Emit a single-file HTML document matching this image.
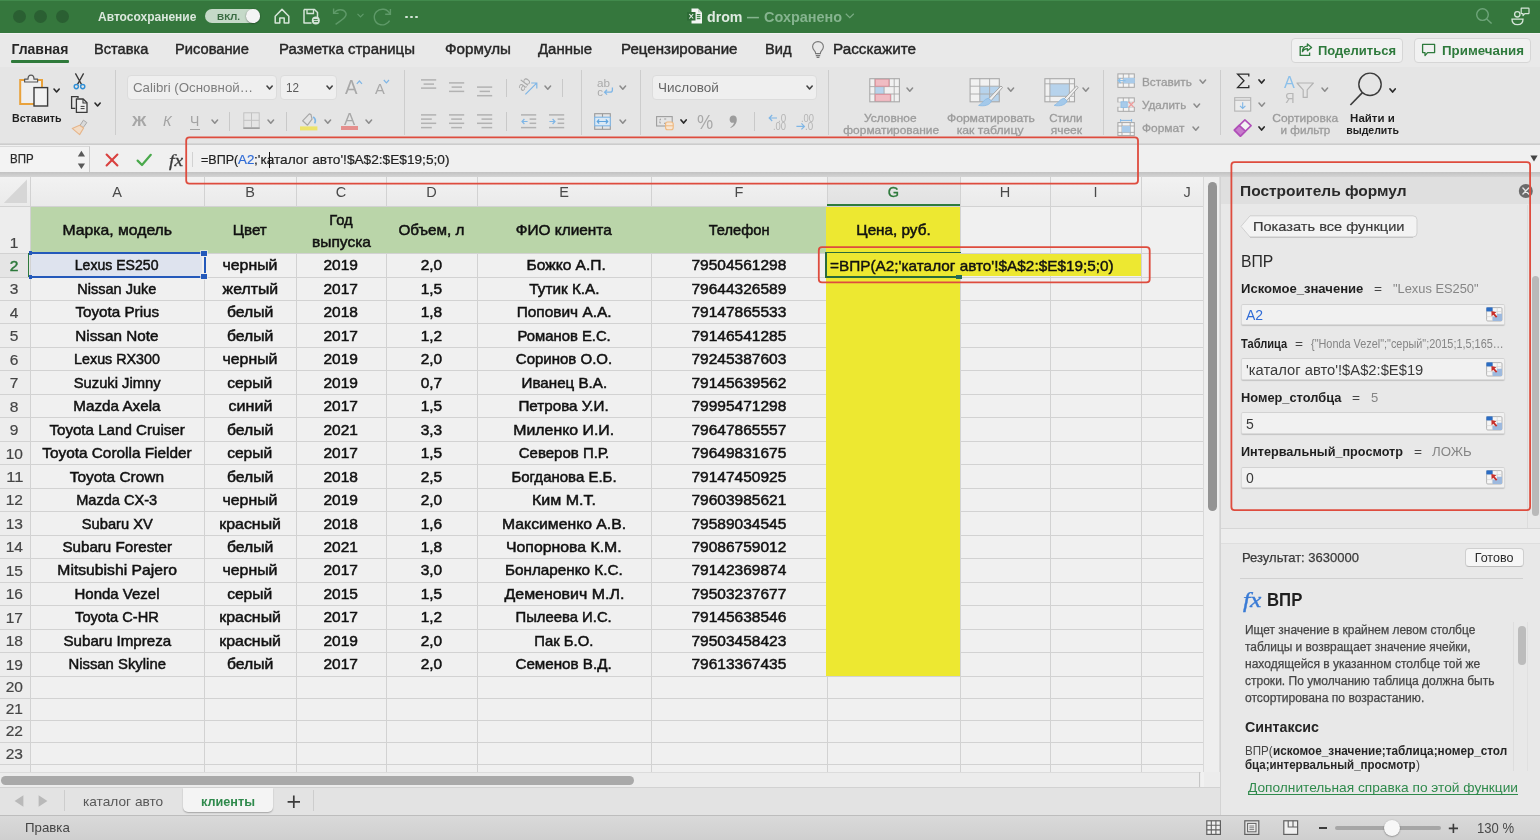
<!DOCTYPE html>
<html><head><meta charset="utf-8"><title>Excel</title>
<style>
html,body{margin:0;padding:0;}
body{font-kerning:none;width:1540px;height:840px;overflow:hidden;position:relative;background:#e6e6e6;font-family:'Liberation Sans', sans-serif;}
svg{overflow:visible}
</style></head><body><div id="root" style="position:absolute;left:0;top:0;width:1540px;height:840px;overflow:hidden;will-change:transform;">
<div style="position:absolute;left:0px;top:0px;width:1540px;height:33px;background:#35773d;"></div>
<div style="position:absolute;left:0px;top:0px;width:1540px;height:1px;background:#418a4c;"></div>
<div style="position:absolute;left:0px;top:33px;width:1540px;height:1px;background:#f2f2f2;"></div>
<div style="position:absolute;left:13.0px;top:10px;width:13px;height:13px;border-radius:50%;background:#2a5f32;"></div>
<div style="position:absolute;left:34.0px;top:10px;width:13px;height:13px;border-radius:50%;background:#2a5f32;"></div>
<div style="position:absolute;left:55.5px;top:10px;width:13px;height:13px;border-radius:50%;background:#2a5f32;"></div>
<div style="position:absolute;left:98.00px;top:8.50px;font:bold 12px 'Liberation Sans', sans-serif;line-height:16px;color:#dbe8dd;white-space:pre;">Автосохранение</div>
<div style="position:absolute;left:204.6px;top:8.8px;width:55px;height:14.6px;border-radius:7.3px;background:#c5d9c8;"></div>
<div style="position:absolute;left:217.00px;top:10.80px;font:bold 9px 'Liberation Sans', sans-serif;line-height:12px;color:#3a6b42;white-space:pre;transform-origin:left center;transform:scaleX(1.1051);">ВКЛ.</div>
<div style="position:absolute;left:246.4px;top:9.4px;width:13.4px;height:13.4px;border-radius:50%;background:#f4f4f4;box-shadow:0 0.5px 1.5px rgba(0,0,0,.55);"></div>
<svg style="position:absolute;left:273px;top:7px;" width="18" height="18" viewBox="0 0 18 18"><path d="M2.2 9.2 L9 2.4 L15.8 9.2 V16 H11.2 V11 H6.8 V16 H2.2 Z" fill="none" stroke="#d5e5d8" stroke-width="1.5" stroke-linejoin="round"/></svg>
<svg style="position:absolute;left:302px;top:7px;" width="20" height="19" viewBox="0 0 20 19"><path d="M2 2.5 H12.5 L15.5 5.5 V11 M9 16 H2 Z M2 16 V2.5" fill="none" stroke="#d5e5d8" stroke-width="1.5" stroke-linejoin="round"/><path d="M5 2.5 V6.5 H11.5 V2.5" fill="none" stroke="#d5e5d8" stroke-width="1.3"/><circle cx="13.8" cy="13.5" r="4" fill="#d5e5d8"/><path d="M11.6 12.6 H15.6 M12 14.6 H16" stroke="#35773d" stroke-width="1"/></svg>
<svg style="position:absolute;left:331px;top:6px;" width="20" height="20" viewBox="0 0 20 20"><path d="M2.6 2.4 V7.4 H7.6" fill="none" stroke="#5f9a69" stroke-width="1.4"/><path d="M2.9 7.2 C6 2.8 12.6 2.6 14.8 6.8 C16.2 10 13.4 12.4 4.6 18.4" fill="none" stroke="#5f9a69" stroke-width="1.4"/></svg>
<svg style="position:absolute;left:357px;top:13px;" width="7" height="5" viewBox="0 0 7 5"><path d="M0.5 0.8 L3.5 3.8 L6.5 0.8" fill="none" stroke="#5f9a69" stroke-width="1.2"/></svg>
<svg style="position:absolute;left:372px;top:6px;" width="22" height="22" viewBox="0 0 22 22"><path d="M18.4 3 V8.2 H13.2" fill="none" stroke="#5f9a69" stroke-width="1.4"/><path d="M18 8 C15.6 2.6 8.4 1.6 4.4 5.8 C0.6 10 2.2 16.6 7.4 18.4 C11.2 19.8 15.6 18.2 17.6 14.6" fill="none" stroke="#5f9a69" stroke-width="1.4"/></svg>
<div style="position:absolute;left:405.3px;top:15.5px;width:2.6px;height:2.6px;border-radius:50%;background:#d5e5d8;"></div>
<div style="position:absolute;left:410.3px;top:15.5px;width:2.6px;height:2.6px;border-radius:50%;background:#d5e5d8;"></div>
<div style="position:absolute;left:415.3px;top:15.5px;width:2.6px;height:2.6px;border-radius:50%;background:#d5e5d8;"></div>
<svg style="position:absolute;left:687px;top:8px;" width="16" height="16" viewBox="0 0 16 16"><path d="M4.5 0.5 H11 L15 4.5 V15.5 H4.5 Z" fill="#f4f6f4"/><path d="M11 0.5 V4.5 H15" fill="#c9d6cb"/><rect x="0" y="4" width="8.5" height="8.5" fill="#2d6b36"/><path d="M2.3 6 L6.2 10.5 M6.2 6 L2.3 10.5" stroke="#e6efe7" stroke-width="1.1"/><path d="M9.8 6.6 H13.4 M9.8 8.6 H13.4 M9.8 10.6 H13.4" stroke="#3d8147" stroke-width="1.1"/></svg>
<div style="position:absolute;left:707.40px;top:7.80px;font:bold 14px 'Liberation Sans', sans-serif;line-height:18px;color:#dfeae1;white-space:pre;transform-origin:left center;transform:scaleX(1.0143);">drom</div>
<div style="position:absolute;left:747.40px;top:7.80px;font:bold 14px 'Liberation Sans', sans-serif;line-height:18px;color:#86b48f;white-space:pre;transform-origin:left center;transform:scaleX(0.8500);">—</div>
<div style="position:absolute;left:763.60px;top:7.80px;font:bold 14px 'Liberation Sans', sans-serif;line-height:18px;color:#86b48f;white-space:pre;transform-origin:left center;transform:scaleX(1.0319);">Сохранено</div>
<svg style="position:absolute;left:844.6px;top:13px;" width="10" height="6" viewBox="0 0 10 6"><path d="M0.8 0.8 L4.8 4.6 L8.8 0.8" fill="none" stroke="#7aab83" stroke-width="1.2"/></svg>
<svg style="position:absolute;left:1474px;top:6px;" width="22" height="22" viewBox="0 0 22 22"><circle cx="8.5" cy="8.6" r="5.8" fill="none" stroke="#6fa57a" stroke-width="1.4"/><path d="M12.7 12.9 L17.6 17.6" stroke="#6fa57a" stroke-width="1.4"/></svg>
<svg style="position:absolute;left:1508px;top:4px;" width="26" height="24" viewBox="0 0 26 24"><circle cx="9.3" cy="10.3" r="2.7" fill="none" stroke="#d5e5d8" stroke-width="1.3"/><path d="M4 15.2 H15 C15 18.8 12.4 20.6 9.5 20.6 C6.6 20.6 4 18.8 4 15.2 Z" fill="none" stroke="#d5e5d8" stroke-width="1.3"/><path d="M13.2 4.2 H20.4 Q21 4.2 21 4.8 V9 Q21 9.6 20.4 9.6 H16.8 L15 11.6 V9.6 H13.8 Q13.2 9.6 13.2 9 Z" fill="#35773d" stroke="#d5e5d8" stroke-width="1.2" stroke-linejoin="round"/></svg>
<div style="position:absolute;left:0px;top:34px;width:1540px;height:33px;background:#e9e9e9;"></div>
<div style="position:absolute;left:0px;top:67px;width:1540px;height:77px;background:#e5e5e5;"></div>
<div style="position:absolute;left:0px;top:142.6px;width:1540px;height:2.4px;background:linear-gradient(#dadada,#c8c8c8);"></div>
<div style="position:absolute;left:11.40px;top:40.00px;font:bold 14px 'Liberation Sans', sans-serif;line-height:18px;color:#262626;white-space:pre;">Главная</div>
<div style="position:absolute;left:11px;top:59.5px;width:57.5px;height:3px;background:#2f7a3b;border-radius:1px;"></div>
<div style="position:absolute;left:93.70px;top:40.20px;font:normal 14px 'Liberation Sans', sans-serif;line-height:18px;color:#262626;white-space:pre;transform-origin:left center;transform:scaleX(1.0433);-webkit-text-stroke:0.4px #262626;">Вставка</div>
<div style="position:absolute;left:175.40px;top:40.20px;font:normal 14px 'Liberation Sans', sans-serif;line-height:18px;color:#262626;white-space:pre;transform-origin:left center;transform:scaleX(1.0494);-webkit-text-stroke:0.4px #262626;">Рисование</div>
<div style="position:absolute;left:279.00px;top:40.20px;font:normal 14px 'Liberation Sans', sans-serif;line-height:18px;color:#262626;white-space:pre;transform-origin:left center;transform:scaleX(1.0707);-webkit-text-stroke:0.4px #262626;">Разметка страницы</div>
<div style="position:absolute;left:445.00px;top:40.20px;font:normal 14px 'Liberation Sans', sans-serif;line-height:18px;color:#262626;white-space:pre;transform-origin:left center;transform:scaleX(1.0834);-webkit-text-stroke:0.4px #262626;">Формулы</div>
<div style="position:absolute;left:538.00px;top:40.20px;font:normal 14px 'Liberation Sans', sans-serif;line-height:18px;color:#262626;white-space:pre;transform-origin:left center;transform:scaleX(1.0673);-webkit-text-stroke:0.4px #262626;">Данные</div>
<div style="position:absolute;left:620.50px;top:40.20px;font:normal 14px 'Liberation Sans', sans-serif;line-height:18px;color:#262626;white-space:pre;transform-origin:left center;transform:scaleX(1.0776);-webkit-text-stroke:0.4px #262626;">Рецензирование</div>
<div style="position:absolute;left:765.00px;top:40.20px;font:normal 14px 'Liberation Sans', sans-serif;line-height:18px;color:#262626;white-space:pre;transform-origin:left center;transform:scaleX(1.0463);-webkit-text-stroke:0.4px #262626;">Вид</div>
<svg style="position:absolute;left:810px;top:40px;" width="16" height="19" viewBox="0 0 16 19"><path d="M8 1.6 C4.7 1.6 2.6 4 2.6 6.8 C2.6 8.8 3.8 10 4.8 11.2 C5.4 12 5.6 12.6 5.6 13.6 H10.4 C10.4 12.6 10.6 12 11.2 11.2 C12.2 10 13.4 8.8 13.4 6.8 C13.4 4 11.3 1.6 8 1.6 Z" fill="none" stroke="#777" stroke-width="1.1"/><path d="M5.8 15.6 H10.2 M6.6 17.4 H9.4" stroke="#777" stroke-width="1.1"/></svg>
<div style="position:absolute;left:832.50px;top:40.20px;font:normal 14px 'Liberation Sans', sans-serif;line-height:18px;color:#262626;white-space:pre;transform-origin:left center;transform:scaleX(1.0905);-webkit-text-stroke:0.4px #262626;">Расскажите</div>
<div style="position:absolute;left:1290.5px;top:37.5px;width:112px;height:25px;background:#f1f1f1;border:1px solid #d6d6d6;border-radius:4px;box-sizing:border-box;"></div>
<svg style="position:absolute;left:1298px;top:42px;" width="16" height="16" viewBox="0 0 16 16"><path d="M9.4 2 L13.6 5.4 L9.4 8.8 V6.6 C6.8 6.6 5.4 7.6 4.4 9.6 C4.4 6.4 6.2 4.2 9.4 4.2 Z" fill="none" stroke="#2e7a3c" stroke-width="1.3" stroke-linejoin="round"/><path d="M5.2 4.6 H2.2 V13.4 H11.6 V10.6" fill="none" stroke="#2e7a3c" stroke-width="1.3"/></svg>
<div style="position:absolute;left:1318.00px;top:42.00px;font:bold 13px 'Liberation Sans', sans-serif;line-height:17px;color:#2e7a3c;white-space:pre;">Поделиться</div>
<div style="position:absolute;left:1413.5px;top:37.5px;width:117.5px;height:25px;background:#f1f1f1;border:1px solid #d6d6d6;border-radius:4px;box-sizing:border-box;"></div>
<svg style="position:absolute;left:1421px;top:43px;" width="16" height="15" viewBox="0 0 16 15"><path d="M1.6 1.4 H13.6 V9.6 H6.6 L4 12.6 V9.6 H1.6 Z" fill="none" stroke="#2e7a3c" stroke-width="1.3" stroke-linejoin="round"/></svg>
<div style="position:absolute;left:1441.50px;top:42.00px;font:bold 13px 'Liberation Sans', sans-serif;line-height:17px;color:#2e7a3c;white-space:pre;transform-origin:left center;transform:scaleX(1.0248);">Примечания</div>
<div style="position:absolute;left:114.5px;top:70px;width:1px;height:64.6px;background:#cdcdcd;"></div>
<div style="position:absolute;left:404.1px;top:70px;width:1px;height:64.6px;background:#cdcdcd;"></div>
<div style="position:absolute;left:580.8px;top:70px;width:1px;height:64.6px;background:#cdcdcd;"></div>
<div style="position:absolute;left:639.8px;top:70px;width:1px;height:64.6px;background:#cdcdcd;"></div>
<div style="position:absolute;left:828.1px;top:70px;width:1px;height:64.6px;background:#cdcdcd;"></div>
<div style="position:absolute;left:1102.9px;top:70px;width:1px;height:64.6px;background:#cdcdcd;"></div>
<div style="position:absolute;left:1219.5px;top:70px;width:1px;height:64.6px;background:#cdcdcd;"></div>
<svg style="position:absolute;left:17px;top:72px;" width="34" height="37" viewBox="0 0 34 37"><rect x="3.2" y="8" width="21.8" height="24" fill="#efefef"/><path d="M8.5 8 H3.2 V32 H17" fill="none" stroke="#e9a23b" stroke-width="2"/><path d="M20 8 H25 V15" fill="none" stroke="#e9a23b" stroke-width="2"/><path d="M7.6 10 V7.2 H11 C11 4.6 12.2 3.2 14 3.2 C15.8 3.2 17 4.6 17 7.2 H20.6 V10 Z" fill="#ececec" stroke="#555" stroke-width="1.2" stroke-linejoin="round"/><rect x="17" y="15.6" width="13.6" height="18.4" fill="#f2f2f2" stroke="#3a3a3a" stroke-width="1.4"/></svg>
<svg style="position:absolute;left:53.199999999999996px;top:87.7px;" width="7.2" height="5.0" viewBox="0 0 7.2 5.0"><path d="M1 1 L3.6 4.0 L6.2 1" fill="none" stroke="#2a2a2a" stroke-width="1.6" stroke-linecap="round" stroke-linejoin="round"/></svg>
<div style="position:absolute;left:12.10px;top:110.70px;font:bold 11px 'Liberation Sans', sans-serif;line-height:14px;color:#1f1f1f;white-space:pre;transform-origin:left center;transform:scaleX(0.9678);">Вставить</div>
<svg style="position:absolute;left:72px;top:72px;" width="15" height="19" viewBox="0 0 15 19"><path d="M3.4 1.4 L9.6 12.6 M11.6 1.4 L5.4 12.6" stroke="#3a3a3a" stroke-width="1.3" fill="none"/><circle cx="4.3" cy="14.6" r="2.1" fill="none" stroke="#2f8fd6" stroke-width="1.4"/><circle cx="10.7" cy="14.6" r="2.1" fill="none" stroke="#2f8fd6" stroke-width="1.4"/></svg>
<svg style="position:absolute;left:70px;top:95px;" width="19" height="19" viewBox="0 0 19 19"><path d="M8 3 V1.6 H1.6 V13.4 H5.4" fill="none" stroke="#3a3a3a" stroke-width="1.3"/><path d="M6.4 4 H13.2 L17 7.8 V17.4 H6.4 Z" fill="#efefef" stroke="#3a3a3a" stroke-width="1.3" stroke-linejoin="round"/><path d="M13 4.2 V8 H16.8" fill="none" stroke="#3a3a3a" stroke-width="1.1"/><path d="M10.6 11.4 H14.6 M10.6 13.6 H14.6" stroke="#3a3a3a" stroke-width="1"/></svg>
<svg style="position:absolute;left:93.9px;top:102.1px;" width="7.2" height="5.0" viewBox="0 0 7.2 5.0"><path d="M1 1 L3.6 4.0 L6.2 1" fill="none" stroke="#2a2a2a" stroke-width="1.6" stroke-linecap="round" stroke-linejoin="round"/></svg>
<svg style="position:absolute;left:71px;top:119px;" width="18" height="17" viewBox="0 0 18 17"><path d="M12.4 1.2 L15.8 3.6 L12.2 8.6 L9 6.4 Z" fill="#dadada" stroke="#a9a9a9" stroke-width="1"/><path d="M8.6 6.2 L12.6 9 L8.6 15.6 L1.2 9.4 Z" fill="#f2dcc6" stroke="#e6b58a" stroke-width="1.1" stroke-linejoin="round"/></svg>
<div style="position:absolute;left:126.5px;top:75.3px;width:150.5px;height:25px;background:#efefef;border:1px solid #dcdcdc;border-radius:4px;box-sizing:border-box;"></div>
<div style="position:absolute;left:133.00px;top:78.60px;font:normal 13.5px 'Liberation Sans', sans-serif;line-height:18px;color:#7d7d7d;white-space:pre;transform-origin:left center;transform:scaleX(0.9844);">Calibri (Основной…</div>
<svg style="position:absolute;left:266.0px;top:85.4px;" width="7.2" height="5.0" viewBox="0 0 7.2 5.0"><path d="M1 1 L3.6 4.0 L6.2 1" fill="none" stroke="#444" stroke-width="1.6" stroke-linecap="round" stroke-linejoin="round"/></svg>
<div style="position:absolute;left:280.3px;top:75.3px;width:57px;height:25px;background:#efefef;border:1px solid #dcdcdc;border-radius:4px;box-sizing:border-box;"></div>
<div style="position:absolute;left:286.40px;top:78.60px;font:normal 13.5px 'Liberation Sans', sans-serif;line-height:18px;color:#5a5a5a;white-space:pre;transform-origin:left center;transform:scaleX(0.8649);">12</div>
<svg style="position:absolute;left:326.0px;top:85.4px;" width="7.2" height="5.0" viewBox="0 0 7.2 5.0"><path d="M1 1 L3.6 4.0 L6.2 1" fill="none" stroke="#444" stroke-width="1.6" stroke-linecap="round" stroke-linejoin="round"/></svg>
<div style="position:absolute;left:344.60px;top:73.50px;font:normal 20px 'Liberation Sans', sans-serif;line-height:26px;color:#a8a8a8;white-space:pre;transform-origin:left center;transform:scaleX(0.9368);">A</div>
<svg style="position:absolute;left:356px;top:79.5px;" width="7" height="5" viewBox="0 0 7 5"><path d="M0.8 3.8 L3.4 1 L6 3.8" fill="none" stroke="#7fb6e6" stroke-width="1.2"/></svg>
<div style="position:absolute;left:374.60px;top:78.50px;font:normal 15.5px 'Liberation Sans', sans-serif;line-height:20px;color:#a8a8a8;white-space:pre;transform-origin:left center;transform:scaleX(0.9474);">A</div>
<svg style="position:absolute;left:383.4px;top:79.2px;" width="7" height="5" viewBox="0 0 7 5"><path d="M0.8 1 L3.4 3.8 L6 1" fill="none" stroke="#7fb6e6" stroke-width="1.2"/></svg>
<div style="position:absolute;left:132.00px;top:111.00px;font:bold 15px 'Liberation Sans', sans-serif;line-height:20px;color:#a6a6a6;white-space:pre;transform-origin:left center;transform:scaleX(1.0618);">Ж</div>
<div style="position:absolute;left:162.60px;top:111.00px;font:italic normal 15px 'Liberation Sans', sans-serif;line-height:20px;color:#a3a3a3;white-space:pre;transform-origin:left center;transform:scaleX(0.9724);">К</div>
<div style="position:absolute;left:190.00px;top:111.00px;font:normal 15px 'Liberation Sans', sans-serif;line-height:20px;color:#a3a3a3;white-space:pre;transform-origin:left center;transform:scaleX(0.9300);">Ч</div>
<div style="position:absolute;left:189.5px;top:129.3px;width:10.5px;height:1.2px;background:#a3a3a3;"></div>
<svg style="position:absolute;left:210.5px;top:119.30000000000001px;" width="7.6" height="5.2" viewBox="0 0 7.6 5.2"><path d="M1 1 L3.8 4.2 L6.6 1" fill="none" stroke="#8c8c8c" stroke-width="1.55" stroke-linecap="round" stroke-linejoin="round"/></svg>
<div style="position:absolute;left:229.2px;top:112.4px;width:1px;height:18.599999999999994px;background:#c9c9c9;"></div>
<svg style="position:absolute;left:242.8px;top:112.4px;" width="17" height="17.5" viewBox="0 0 17 17.5"><rect x="0.8" y="0.8" width="15.4" height="15" fill="none" stroke="#c2c2c2" stroke-width="1"/><path d="M8.5 0.8 V15.8 M0.8 8.3 H16.2" stroke="#c2c2c2" stroke-width="1"/><path d="M0.3 16.2 H16.7" stroke="#9c9c9c" stroke-width="1.5"/></svg>
<svg style="position:absolute;left:267.2px;top:119.30000000000001px;" width="7.6" height="5.2" viewBox="0 0 7.6 5.2"><path d="M1 1 L3.8 4.2 L6.6 1" fill="none" stroke="#8c8c8c" stroke-width="1.55" stroke-linecap="round" stroke-linejoin="round"/></svg>
<div style="position:absolute;left:285.9px;top:112.4px;width:1px;height:18.599999999999994px;background:#c9c9c9;"></div>
<svg style="position:absolute;left:300px;top:111.5px;" width="18" height="19" viewBox="0 0 18 19"><path d="M9.3 1.8 L2.6 8.8 L7.5 13.2 L12 7.2 L11 2.6 Z" fill="none" stroke="#a8a8a8" stroke-width="1.2" stroke-linejoin="round"/><path d="M13.2 4.8 C15.4 6.6 15.8 9.2 14.6 11.4" fill="none" stroke="#7fb6e6" stroke-width="1.7"/><rect x="0" y="14.4" width="17.4" height="4" fill="#ede36a"/></svg>
<svg style="position:absolute;left:324.0px;top:119.30000000000001px;" width="7.6" height="5.2" viewBox="0 0 7.6 5.2"><path d="M1 1 L3.8 4.2 L6.6 1" fill="none" stroke="#8c8c8c" stroke-width="1.55" stroke-linecap="round" stroke-linejoin="round"/></svg>
<div style="position:absolute;left:343.80px;top:109.10px;font:normal 16.5px 'Liberation Sans', sans-serif;line-height:21px;color:#a8a8a8;white-space:pre;transform-origin:left center;transform:scaleX(1.0167);">A</div>
<div style="position:absolute;left:340.7px;top:126px;width:17.2px;height:4px;background:#e58f8d;"></div>
<svg style="position:absolute;left:364.9px;top:119.30000000000001px;" width="7.6" height="5.2" viewBox="0 0 7.6 5.2"><path d="M1 1 L3.8 4.2 L6.6 1" fill="none" stroke="#8c8c8c" stroke-width="1.55" stroke-linecap="round" stroke-linejoin="round"/></svg>
<svg style="position:absolute;left:421px;top:0px;" width="20" height="140" viewBox="0 0 20 140"><rect x="0" y="79.15" width="15.2" height="1.5" fill="#b2b2b2"/><rect x="2.6" y="83.35" width="10.4" height="1.5" fill="#b2b2b2"/><rect x="0" y="87.35" width="15.2" height="1.5" fill="#b2b2b2"/></svg>
<svg style="position:absolute;left:449px;top:0px;" width="20" height="140" viewBox="0 0 20 140"><rect x="0" y="82.15" width="15.2" height="1.5" fill="#b2b2b2"/><rect x="2.6" y="86.35" width="10.4" height="1.5" fill="#b2b2b2"/><rect x="0" y="90.65" width="15.2" height="1.5" fill="#b2b2b2"/></svg>
<svg style="position:absolute;left:476.9px;top:0px;" width="20" height="140" viewBox="0 0 20 140"><rect x="0" y="86.35" width="15.2" height="1.5" fill="#b2b2b2"/><rect x="2.6" y="90.65" width="10.4" height="1.5" fill="#b2b2b2"/><rect x="0" y="94.95" width="15.2" height="1.5" fill="#b2b2b2"/></svg>
<div style="position:absolute;left:505.9px;top:78.6px;width:1px;height:18.200000000000003px;background:#c9c9c9;"></div>
<div style="position:absolute;left:516.5px;top:77px;font:12.5px 'Liberation Sans',sans-serif;color:#aaaaaa;transform:rotate(-52deg);transform-origin:center;line-height:14px;">ab</div>
<svg style="position:absolute;left:524px;top:81px;" width="15" height="15" viewBox="0 0 15 15"><path d="M1.4 13.4 L12.4 2.4 M7.2 2 H12.8 V7.6" fill="none" stroke="#7fb6e6" stroke-width="1.2"/></svg>
<svg style="position:absolute;left:543.7px;top:85.4px;" width="7.6" height="5.2" viewBox="0 0 7.6 5.2"><path d="M1 1 L3.8 4.2 L6.6 1" fill="none" stroke="#8c8c8c" stroke-width="1.55" stroke-linecap="round" stroke-linejoin="round"/></svg>
<div style="position:absolute;left:562.4px;top:78.6px;width:1px;height:18.200000000000003px;background:#c9c9c9;"></div>
<svg style="position:absolute;left:421px;top:0px;" width="20" height="140" viewBox="0 0 20 140"><rect x="0" y="114.15" width="15.2" height="1.5" fill="#b2b2b2"/><rect x="0" y="118.35" width="10.8" height="1.5" fill="#b2b2b2"/><rect x="0" y="122.55" width="15.2" height="1.5" fill="#b2b2b2"/><rect x="0" y="126.85" width="10.8" height="1.5" fill="#b2b2b2"/></svg>
<svg style="position:absolute;left:449px;top:0px;" width="20" height="140" viewBox="0 0 20 140"><rect x="0" y="114.15" width="15.2" height="1.5" fill="#b2b2b2"/><rect x="2.2" y="118.35" width="10.8" height="1.5" fill="#b2b2b2"/><rect x="0" y="122.55" width="15.2" height="1.5" fill="#b2b2b2"/><rect x="2.2" y="126.85" width="10.8" height="1.5" fill="#b2b2b2"/></svg>
<svg style="position:absolute;left:476.9px;top:0px;" width="20" height="140" viewBox="0 0 20 140"><rect x="0" y="114.15" width="15.2" height="1.5" fill="#b2b2b2"/><rect x="4.5" y="118.35" width="10.7" height="1.5" fill="#b2b2b2"/><rect x="0" y="122.55" width="15.2" height="1.5" fill="#b2b2b2"/><rect x="4.5" y="126.85" width="10.7" height="1.5" fill="#b2b2b2"/></svg>
<div style="position:absolute;left:505.9px;top:112.4px;width:1px;height:18.599999999999994px;background:#c9c9c9;"></div>
<svg style="position:absolute;left:520.7px;top:0px;" width="20" height="140" viewBox="0 0 20 140"><rect x="0" y="114.15" width="15.2" height="1.5" fill="#b2b2b2"/><rect x="8.6" y="118.35" width="6.6" height="1.5" fill="#b2b2b2"/><rect x="8.6" y="122.55" width="6.6" height="1.5" fill="#b2b2b2"/><rect x="0" y="126.85" width="15.2" height="1.5" fill="#b2b2b2"/></svg>
<svg style="position:absolute;left:520.7px;top:117.8px;" width="8" height="7" viewBox="0 0 8 7"><path d="M6.6 3.5 H1 M3.4 1 L1 3.5 L3.4 6" fill="none" stroke="#7fb6e6" stroke-width="1.2"/></svg>
<svg style="position:absolute;left:548.6px;top:0px;" width="20" height="140" viewBox="0 0 20 140"><rect x="0" y="114.15" width="15.2" height="1.5" fill="#b2b2b2"/><rect x="8.6" y="118.35" width="6.6" height="1.5" fill="#b2b2b2"/><rect x="8.6" y="122.55" width="6.6" height="1.5" fill="#b2b2b2"/><rect x="0" y="126.85" width="15.2" height="1.5" fill="#b2b2b2"/></svg>
<svg style="position:absolute;left:548.6px;top:117.8px;" width="8" height="7" viewBox="0 0 8 7"><path d="M0.4 3.5 H6 M3.6 1 L6 3.5 L3.6 6" fill="none" stroke="#7fb6e6" stroke-width="1.2"/></svg>
<div style="position:absolute;left:597.20px;top:76.00px;font:normal 11.5px 'Liberation Sans', sans-serif;line-height:15px;color:#aaaaaa;white-space:pre;transform-origin:left center;transform:scaleX(1.0159);">ab</div>
<div style="position:absolute;left:597.20px;top:85.00px;font:normal 11.5px 'Liberation Sans', sans-serif;line-height:15px;color:#aaaaaa;white-space:pre;">c</div>
<svg style="position:absolute;left:603px;top:87px;" width="11" height="9" viewBox="0 0 11 9"><path d="M9.4 0.6 V3 C9.4 4.6 8.4 5.2 7 5.2 H1.6 M4 2.8 L1.6 5.2 L4 7.6" fill="none" stroke="#7fb6e6" stroke-width="1.3"/></svg>
<svg style="position:absolute;left:618.5px;top:85.4px;" width="7.6" height="5.2" viewBox="0 0 7.6 5.2"><path d="M1 1 L3.8 4.2 L6.6 1" fill="none" stroke="#8c8c8c" stroke-width="1.55" stroke-linecap="round" stroke-linejoin="round"/></svg>
<svg style="position:absolute;left:594.4px;top:112.6px;" width="17" height="17" viewBox="0 0 17 17"><rect x="0.7" y="0.7" width="15.6" height="15.6" fill="none" stroke="#9a9a9a" stroke-width="1.1"/><path d="M8.5 0.7 V4.2 M8.5 12.8 V16.3" stroke="#9a9a9a" stroke-width="1.1"/><rect x="0.7" y="4.2" width="15.6" height="8.6" fill="#dbe9f5" stroke="#7fb6e6" stroke-width="1.1"/><path d="M3.2 8.5 H13.8 M5.2 6.5 L3.2 8.5 L5.2 10.5 M11.8 6.5 L13.8 8.5 L11.8 10.5" fill="none" stroke="#5fa3dd" stroke-width="1.1"/></svg>
<svg style="position:absolute;left:618.5px;top:119.10000000000001px;" width="7.6" height="5.2" viewBox="0 0 7.6 5.2"><path d="M1 1 L3.8 4.2 L6.6 1" fill="none" stroke="#8c8c8c" stroke-width="1.55" stroke-linecap="round" stroke-linejoin="round"/></svg>
<div style="position:absolute;left:651.7px;top:75.3px;width:165.6px;height:25px;background:#efefef;border:1px solid #dcdcdc;border-radius:4px;box-sizing:border-box;"></div>
<div style="position:absolute;left:658.00px;top:78.60px;font:normal 13.5px 'Liberation Sans', sans-serif;line-height:18px;color:#666;white-space:pre;">Числовой</div>
<svg style="position:absolute;left:805.9px;top:85.4px;" width="7.2" height="5.0" viewBox="0 0 7.2 5.0"><path d="M1 1 L3.6 4.0 L6.2 1" fill="none" stroke="#444" stroke-width="1.6" stroke-linecap="round" stroke-linejoin="round"/></svg>
<svg style="position:absolute;left:655.5px;top:115.6px;" width="18" height="14.5" viewBox="0 0 18 14.5"><rect x="0.6" y="0.6" width="15.6" height="9.4" fill="none" stroke="#9d9d9d" stroke-width="1.1"/><path d="M5 3 C3.4 3 3.2 7.4 5 7.4 M8.2 3 H10.6 M8.2 7.4 H10.6" fill="none" stroke="#9d9d9d" stroke-width="1.1" stroke-dasharray="2 1"/><rect x="9.6" y="6" width="7.6" height="7.8" rx="2" fill="#f7e6d4" stroke="#efb77c" stroke-width="1.1"/><path d="M9.6 9.8 H17.2" stroke="#efb77c" stroke-width="1"/></svg>
<svg style="position:absolute;left:680.1999999999999px;top:119.4px;" width="7.2" height="5.0" viewBox="0 0 7.2 5.0"><path d="M1 1 L3.6 4.0 L6.2 1" fill="none" stroke="#2a2a2a" stroke-width="1.7" stroke-linecap="round" stroke-linejoin="round"/></svg>
<div style="position:absolute;left:697.00px;top:108.60px;font:normal 20px 'Liberation Sans', sans-serif;line-height:26px;color:#a9a9a9;white-space:pre;transform-origin:left center;transform:scaleX(0.9103);">%</div>
<svg style="position:absolute;left:729px;top:115.4px;" width="9" height="14" viewBox="0 0 9 14"><path d="M4.2 0.6 C6.4 0.6 7.8 2.2 7.8 4.6 C7.8 8.4 5.6 11.6 1.8 13 L1.4 12.2 C3.6 11 4.8 9.4 5 7.6 C4.6 7.8 4.2 7.8 3.8 7.8 C1.8 7.8 0.6 6.4 0.6 4.4 C0.6 2.2 2.2 0.6 4.2 0.6 Z" fill="#9d9d9d"/></svg>
<div style="position:absolute;left:754.2px;top:112.4px;width:1px;height:18.599999999999994px;background:#c9c9c9;"></div>
<svg style="position:absolute;left:768px;top:113.6px;" width="18" height="10" viewBox="0 0 18 10"><path d="M9 4 H1.2 M4.2 1 L1.2 4 L4.2 7" fill="none" stroke="#7fb6e6" stroke-width="1.2"/></svg>
<div style="position:absolute;left:777.80px;top:111.70px;font:normal 10px 'Liberation Sans', sans-serif;line-height:13px;color:#b4b4b4;white-space:pre;transform-origin:left center;transform:scaleX(0.9828);">.0</div>
<div style="position:absolute;left:772.60px;top:120.30px;font:normal 10px 'Liberation Sans', sans-serif;line-height:13px;color:#b4b4b4;white-space:pre;transform-origin:left center;transform:scaleX(0.9348);">.00</div>
<div style="position:absolute;left:800.50px;top:111.70px;font:normal 10px 'Liberation Sans', sans-serif;line-height:13px;color:#b4b4b4;white-space:pre;transform-origin:left center;transform:scaleX(0.9348);">.00</div>
<svg style="position:absolute;left:796px;top:122.4px;" width="12" height="9" viewBox="0 0 12 9"><path d="M0.4 4.4 H8.4 M5.4 1.4 L8.4 4.4 L5.4 7.4" fill="none" stroke="#7fb6e6" stroke-width="1.2"/></svg>
<div style="position:absolute;left:805.40px;top:120.30px;font:normal 10px 'Liberation Sans', sans-serif;line-height:13px;color:#b4b4b4;white-space:pre;transform-origin:left center;transform:scaleX(0.9828);">.0</div>
<svg style="position:absolute;left:868.6px;top:78px;" width="31" height="25" viewBox="0 0 31 25"><rect x="0.8" y="0.7" width="29.6" height="23.1" fill="#f1f1f1"/><rect x="5.9" y="0.7" width="14.4" height="7.9" fill="#f0bcc3"/><rect x="5.9" y="16" width="15.9" height="7.8" fill="#f0bcc3"/><rect x="5.9" y="8.6" width="9.2" height="7.4" fill="#b7d3ec"/><path d="M5.9 0.7 V23.8 M20.3 0.7 V8.6 M21.8 16 V23.8 M15.1 8.6 V16 M25.2 0.7 V23.8 M0.8 8.6 H30.4 M0.8 16 H30.4" stroke="#a9a9a9" stroke-width="0.9" fill="none"/><path d="M6.3 1.1 H19.9 V8.2 H6.3 Z M6.3 16.4 H21.4 V23.4 H6.3 Z" fill="none" stroke="#e48a98" stroke-width="0.8"/><rect x="0.8" y="0.7" width="29.6" height="23.1" fill="none" stroke="#a9a9a9" stroke-width="1.1"/></svg>
<svg style="position:absolute;left:906.0px;top:87.0px;" width="7.6" height="5.2" viewBox="0 0 7.6 5.2"><path d="M1 1 L3.8 4.2 L6.6 1" fill="none" stroke="#8c8c8c" stroke-width="1.55" stroke-linecap="round" stroke-linejoin="round"/></svg>
<div style="position:absolute;left:866.41px;top:111.20px;font:normal 11px 'Liberation Sans', sans-serif;line-height:14px;color:#9b9b9b;white-space:pre;transform-origin:center center;transform:scaleX(1.0807);-webkit-text-stroke:0.3px #9b9b9b;">Условное</div>
<div style="position:absolute;left:846.74px;top:123.20px;font:normal 11px 'Liberation Sans', sans-serif;line-height:14px;color:#9b9b9b;white-space:pre;transform-origin:center center;transform:scaleX(1.0835);-webkit-text-stroke:0.3px #9b9b9b;">форматирование</div>
<svg style="position:absolute;left:969.2px;top:78px;" width="35" height="30" viewBox="0 0 35 30"><rect x="1.1" y="0.7" width="29.2" height="23.1" fill="#f1f1f1"/><rect x="10.8" y="8.2" width="19.5" height="15.6" fill="#b7d3ec"/><path d="M10.8 0.7 V23.8 M20.6 0.7 V23.8 M1.1 8.2 H30.3 M1.1 16 H30.3" stroke="#a9a9a9" stroke-width="0.9"/><rect x="1.1" y="0.7" width="29.2" height="23.1" fill="none" stroke="#a9a9a9" stroke-width="1.1"/><path d="M31.9 8 L33.6 9.4 L22 22.8 L19.6 20.8 Z" fill="#efefef" stroke="#a6a6a6" stroke-width="1"/><path d="M19.4 20.2 L22.4 22.8 C21.4 27.2 15 28.6 9.6 27.4 C13.6 25.6 14.6 21.2 19.4 20.2 Z" fill="#a4c9ea" stroke="#86b9e4" stroke-width="0.8"/></svg>
<svg style="position:absolute;left:1006.8000000000001px;top:87.0px;" width="7.6" height="5.2" viewBox="0 0 7.6 5.2"><path d="M1 1 L3.8 4.2 L6.6 1" fill="none" stroke="#8c8c8c" stroke-width="1.55" stroke-linecap="round" stroke-linejoin="round"/></svg>
<div style="position:absolute;left:951.09px;top:111.20px;font:normal 11px 'Liberation Sans', sans-serif;line-height:14px;color:#9b9b9b;white-space:pre;transform-origin:center center;transform:scaleX(1.1024);-webkit-text-stroke:0.3px #9b9b9b;">Форматировать</div>
<div style="position:absolute;left:960.48px;top:123.20px;font:normal 11px 'Liberation Sans', sans-serif;line-height:14px;color:#9b9b9b;white-space:pre;transform-origin:center center;transform:scaleX(1.1087);-webkit-text-stroke:0.3px #9b9b9b;">как таблицу</div>
<svg style="position:absolute;left:1044.2px;top:78px;" width="36" height="30" viewBox="0 0 36 30"><rect x="0.9" y="0.7" width="29.6" height="23.1" fill="#f1f1f1"/><rect x="5.9" y="5.8" width="19.5" height="12.5" fill="#b7d3ec"/><path d="M5.9 0.7 V23.8 M25.4 0.7 V23.8 M0.9 5.8 H30.5 M0.9 18.3 H30.5" stroke="#a9a9a9" stroke-width="0.9"/><rect x="0.9" y="0.7" width="29.6" height="23.1" fill="none" stroke="#a9a9a9" stroke-width="1.1"/><path d="M32.5 8 L34.2 9.4 L22.6 22.8 L20.200000000000003 20.8 Z" fill="#efefef" stroke="#a6a6a6" stroke-width="1"/><path d="M20.0 20.2 L23.0 22.8 C22.0 27.2 15.6 28.6 10.2 27.4 C14.2 25.6 15.2 21.2 20.0 20.2 Z" fill="#a4c9ea" stroke="#86b9e4" stroke-width="0.8"/></svg>
<svg style="position:absolute;left:1081.9px;top:87.0px;" width="7.6" height="5.2" viewBox="0 0 7.6 5.2"><path d="M1 1 L3.8 4.2 L6.6 1" fill="none" stroke="#8c8c8c" stroke-width="1.55" stroke-linecap="round" stroke-linejoin="round"/></svg>
<div style="position:absolute;left:1050.35px;top:111.20px;font:normal 11px 'Liberation Sans', sans-serif;line-height:14px;color:#9b9b9b;white-space:pre;transform-origin:center center;transform:scaleX(1.0409);-webkit-text-stroke:0.3px #9b9b9b;">Стили</div>
<div style="position:absolute;left:1051.83px;top:123.20px;font:normal 11px 'Liberation Sans', sans-serif;line-height:14px;color:#9b9b9b;white-space:pre;transform-origin:center center;transform:scaleX(1.0922);-webkit-text-stroke:0.3px #9b9b9b;">ячеек</div>
<svg style="position:absolute;left:1116.6px;top:73.2px;" width="19" height="17" viewBox="0 0 19 17"><rect x="0.9" y="0.9" width="16.4" height="13.4" fill="#f4f4f4" stroke="#a6a6a6" stroke-width="1"/><path d="M6.3 0.9 V14.3 M11.9 0.9 V14.3 M0.9 5.3 H17.3 M0.9 9.9 H17.3" stroke="#a6a6a6" stroke-width="0.9"/><rect x="6.3" y="4.9" width="11.5" height="5.4" fill="#a9cbea"/><path d="M8.6 7.6 H1.2 M3.8 5.2 L1.2 7.6 L3.8 10" fill="none" stroke="#8bbfe9" stroke-width="1.3"/></svg>
<svg style="position:absolute;left:1116.6px;top:96.6px;" width="19" height="17" viewBox="0 0 19 17"><rect x="0.9" y="0.9" width="16.4" height="13.4" fill="#f4f4f4" stroke="#a6a6a6" stroke-width="1"/><path d="M6.3 0.9 V14.3 M11.9 0.9 V14.3 M0.9 5.3 H17.3 M0.9 9.9 H17.3" stroke="#a6a6a6" stroke-width="0.9"/><rect x="0" y="5.4" width="18.4" height="4.4" fill="#e5e5e5"/><rect x="4" y="4.8" width="6.2" height="5.6" fill="#a9cbea" stroke="#8bbfe9" stroke-width="0.8"/><path d="M11.8 5 L16.6 10.2 M16.6 5 L11.8 10.2" stroke="#ef9a9a" stroke-width="1.2"/></svg>
<svg style="position:absolute;left:1116.6px;top:119px;" width="19" height="17" viewBox="0 0 19 17"><rect x="0.9" y="3.6" width="16.4" height="13" fill="#f4f4f4" stroke="#a6a6a6" stroke-width="1"/><path d="M5 3.6 V16.6 M13.2 3.6 V16.6 M0.9 7 H17.3 M0.9 13.4 H17.3" stroke="#a6a6a6" stroke-width="0.9"/><rect x="5" y="7" width="8.2" height="6.4" fill="#a9cbea"/><path d="M3.6 1.4 H14.6 M3.6 0 V2.8 M14.6 0 V2.8" stroke="#7fb6e6" stroke-width="1" fill="none"/></svg>
<div style="position:absolute;left:1141.60px;top:74.60px;font:normal 11px 'Liberation Sans', sans-serif;line-height:14px;color:#9b9b9b;white-space:pre;transform-origin:left center;transform:scaleX(1.0677);-webkit-text-stroke:0.3px #9b9b9b;">Вставить</div>
<svg style="position:absolute;left:1198.6000000000001px;top:79.4px;" width="7.6" height="5.2" viewBox="0 0 7.6 5.2"><path d="M1 1 L3.8 4.2 L6.6 1" fill="none" stroke="#8c8c8c" stroke-width="1.55" stroke-linecap="round" stroke-linejoin="round"/></svg>
<div style="position:absolute;left:1141.60px;top:97.90px;font:normal 11px 'Liberation Sans', sans-serif;line-height:14px;color:#9b9b9b;white-space:pre;transform-origin:left center;transform:scaleX(1.0524);-webkit-text-stroke:0.3px #9b9b9b;">Удалить</div>
<svg style="position:absolute;left:1192.7px;top:102.70000000000002px;" width="7.6" height="5.2" viewBox="0 0 7.6 5.2"><path d="M1 1 L3.8 4.2 L6.6 1" fill="none" stroke="#8c8c8c" stroke-width="1.55" stroke-linecap="round" stroke-linejoin="round"/></svg>
<div style="position:absolute;left:1141.60px;top:120.90px;font:normal 11px 'Liberation Sans', sans-serif;line-height:14px;color:#9b9b9b;white-space:pre;transform-origin:left center;transform:scaleX(1.0850);-webkit-text-stroke:0.3px #9b9b9b;">Формат</div>
<svg style="position:absolute;left:1192.2px;top:125.70000000000002px;" width="7.6" height="5.2" viewBox="0 0 7.6 5.2"><path d="M1 1 L3.8 4.2 L6.6 1" fill="none" stroke="#8c8c8c" stroke-width="1.55" stroke-linecap="round" stroke-linejoin="round"/></svg>
<svg style="position:absolute;left:1236px;top:72.8px;" width="15" height="16" viewBox="0 0 15 16"><path d="M12.8 3.6 V1.2 H1.6 L8 7.8 L1.6 14.6 H12.8 V12.2" fill="none" stroke="#2c2c2c" stroke-width="1.3" stroke-linejoin="miter"/></svg>
<svg style="position:absolute;left:1257.8000000000002px;top:78.7px;" width="7.2" height="5.0" viewBox="0 0 7.2 5.0"><path d="M1 1 L3.6 4.0 L6.2 1" fill="none" stroke="#2a2a2a" stroke-width="1.7" stroke-linecap="round" stroke-linejoin="round"/></svg>
<svg style="position:absolute;left:1234px;top:96.8px;" width="18" height="15" viewBox="0 0 18 15"><rect x="0.7" y="0.7" width="16" height="13.4" fill="#ececec" stroke="#b4b4b4" stroke-width="1.1"/><path d="M0.7 3.2 H16.7" stroke="#b4b4b4" stroke-width="1.1"/><path d="M8.7 5.2 V11.4 M6 8.8 L8.7 11.4 L11.4 8.8" fill="none" stroke="#7fb6e6" stroke-width="1.1"/></svg>
<svg style="position:absolute;left:1257.6000000000001px;top:102.0px;" width="7.6" height="5.2" viewBox="0 0 7.6 5.2"><path d="M1 1 L3.8 4.2 L6.6 1" fill="none" stroke="#8c8c8c" stroke-width="1.55" stroke-linecap="round" stroke-linejoin="round"/></svg>
<svg style="position:absolute;left:1233px;top:119px;" width="20" height="18" viewBox="0 0 20 18"><path d="M11.9 0.9 L18.1 6.6 L7.4 17.1 L1.4 11.1 Z" fill="#f3f3f3" stroke="#b04fb8" stroke-width="1.6" stroke-linejoin="round"/><path d="M6.2 6.4 L12.4 12.2 L7.4 17.1 L1.4 11.1 Z" fill="#c77bcc" stroke="#b04fb8" stroke-width="1.6" stroke-linejoin="round"/></svg>
<svg style="position:absolute;left:1257.8000000000002px;top:125.5px;" width="7.2" height="5.0" viewBox="0 0 7.2 5.0"><path d="M1 1 L3.6 4.0 L6.2 1" fill="none" stroke="#2a2a2a" stroke-width="1.7" stroke-linecap="round" stroke-linejoin="round"/></svg>
<div style="position:absolute;left:1283.60px;top:71.60px;font:normal 17px 'Liberation Sans', sans-serif;line-height:22px;color:#8cc0ea;white-space:pre;transform-origin:left center;transform:scaleX(0.9521);">A</div>
<div style="position:absolute;left:1284.60px;top:87.80px;font:normal 15px 'Liberation Sans', sans-serif;line-height:20px;color:#b7b7b7;white-space:pre;transform-origin:left center;transform:scaleX(0.8853);">Я</div>
<svg style="position:absolute;left:1296px;top:82px;" width="19" height="17" viewBox="0 0 19 17"><path d="M1 1 H17.4 L11.2 7.8 V15.4 H7.2 V7.8 Z" fill="none" stroke="#b4b4b4" stroke-width="1.2" stroke-linejoin="round"/></svg>
<svg style="position:absolute;left:1320.6000000000001px;top:86.80000000000001px;" width="7.6" height="5.2" viewBox="0 0 7.6 5.2"><path d="M1 1 L3.8 4.2 L6.6 1" fill="none" stroke="#8c8c8c" stroke-width="1.55" stroke-linecap="round" stroke-linejoin="round"/></svg>
<div style="position:absolute;left:1275.21px;top:111.20px;font:normal 11px 'Liberation Sans', sans-serif;line-height:14px;color:#9b9b9b;white-space:pre;transform-origin:center center;transform:scaleX(1.0899);-webkit-text-stroke:0.3px #9b9b9b;">Сортировка</div>
<div style="position:absolute;left:1281.88px;top:123.30px;font:normal 11px 'Liberation Sans', sans-serif;line-height:14px;color:#9b9b9b;white-space:pre;transform-origin:center center;transform:scaleX(1.0631);-webkit-text-stroke:0.3px #9b9b9b;">и фильтр</div>
<svg style="position:absolute;left:1348px;top:71px;" width="36" height="36" viewBox="0 0 36 36"><circle cx="22" cy="13.3" r="11.2" fill="none" stroke="#3a3a3a" stroke-width="1.4"/><path d="M14.4 21.6 L2.4 34" stroke="#3a3a3a" stroke-width="1.6"/></svg>
<svg style="position:absolute;left:1388.6000000000001px;top:87.5px;" width="7.2" height="5.0" viewBox="0 0 7.2 5.0"><path d="M1 1 L3.6 4.0 L6.2 1" fill="none" stroke="#2a2a2a" stroke-width="1.7" stroke-linecap="round" stroke-linejoin="round"/></svg>
<div style="position:absolute;left:1350.90px;top:111.20px;font:bold 11px 'Liberation Sans', sans-serif;line-height:14px;color:#1f1f1f;white-space:pre;transform-origin:center center;transform:scaleX(1.0421);">Найти и</div>
<div style="position:absolute;left:1344.92px;top:123.30px;font:bold 11px 'Liberation Sans', sans-serif;line-height:14px;color:#1f1f1f;white-space:pre;transform-origin:center center;transform:scaleX(0.9537);">выделить</div>
<div style="position:absolute;left:0px;top:145px;width:1540px;height:27.5px;background:#f0f0f0;"></div>
<div style="position:absolute;left:0px;top:145.5px;width:89.5px;height:27px;background:#f3f3f3;border-right:1px solid #cbcbcb;border-top:1px solid #d9d9d9;box-sizing:border-box;"></div>
<div style="position:absolute;left:10.40px;top:151.40px;font:normal 12.5px 'Liberation Sans', sans-serif;line-height:16px;color:#2a2a2a;white-space:pre;transform-origin:left center;transform:scaleX(0.9193);-webkit-text-stroke:0.25px #2a2a2a;">ВПР</div>
<svg style="position:absolute;left:76.5px;top:149.5px;" width="9" height="20" viewBox="0 0 9 20"><path d="M0.8 6.4 L4.4 0.8 L8 6.4 Z" fill="#595959"/><path d="M0.8 13.4 L4.4 19 L8 13.4 Z" fill="#595959"/></svg>
<svg style="position:absolute;left:105px;top:152.5px;" width="14" height="14" viewBox="0 0 14 14"><path d="M1.6 1.6 L12.4 12.4 M12.4 1.6 L1.6 12.4" stroke="#d9413f" stroke-width="2.1" stroke-linecap="round"/></svg>
<svg style="position:absolute;left:135.5px;top:152.5px;" width="17" height="14" viewBox="0 0 17 14"><path d="M1.6 7.6 L6 12 L14.8 1.8" fill="none" stroke="#4aa94c" stroke-width="2.2" stroke-linecap="round" stroke-linejoin="round"/></svg>
<div style="position:absolute;left:169.40px;top:149.50px;font:italic normal 16.5px 'Liberation Serif', serif;line-height:21px;color:#3a3a3a;white-space:pre;transform-origin:left center;transform:scaleX(1.1743);-webkit-text-stroke:0.3px #3a3a3a;">fx</div>
<div style="position:absolute;left:192px;top:152.4px;width:1px;height:14.6px;background:#d2d2d2;"></div>
<div style="position:absolute;left:200.60px;top:150.60px;font:normal 13.6px 'Liberation Sans', sans-serif;line-height:18px;color:#222;white-space:pre;transform-origin:left center;transform:scaleX(0.9230);-webkit-text-stroke:0.2px #222;">=ВПР(</div>
<div style="position:absolute;left:237.87px;top:150.60px;font:normal 13.6px 'Liberation Sans', sans-serif;line-height:18px;color:#2f6bd6;white-space:pre;transform-origin:left center;transform:scaleX(0.9793);-webkit-text-stroke:0.2px #2f6bd6;">A2</div>
<div style="position:absolute;left:254.16px;top:150.60px;font:normal 13.6px 'Liberation Sans', sans-serif;line-height:18px;color:#222;white-space:pre;transform-origin:left center;transform:scaleX(1.0054);-webkit-text-stroke:0.2px #222;">;'каталог авто'!$A$2:$E$19;5;0)</div>
<div style="position:absolute;left:269.4px;top:151.5px;width:1.1px;height:16px;background:#111;"></div>
<svg style="position:absolute;left:1530px;top:155px;" width="9" height="8" viewBox="0 0 9 8"><path d="M0.4 0.4 H7.6 L4 6.4 Z" fill="#444"/></svg>
<div style="position:absolute;left:0px;top:172.4px;width:1540px;height:4.2px;background:linear-gradient(#c2c2c2,#d4d4d4);"></div>
<div style="position:absolute;left:0;top:176.5px;width:1204px;height:595.5px;background:#f0f0f0;overflow:hidden;">
</div>
<div style="position:absolute;left:0px;top:176.5px;width:1204px;height:29.80000000000001px;background:linear-gradient(#f2f2f2,#eaeaea);"></div>
<div style="position:absolute;left:0px;top:206.3px;width:30px;height:565.7px;background:#ededed;"></div>
<div style="position:absolute;left:827px;top:176.5px;width:133px;height:29.80000000000001px;background:linear-gradient(#e9e9e9,#e1e1e1);"></div>
<div style="position:absolute;left:0px;top:253.3px;width:30px;height:23.47px;background:#e5e5e5;"></div>
<div style="position:absolute;left:30px;top:206.3px;width:797px;height:47.0px;background:#bad5a9;"></div>
<div style="position:absolute;left:826.2px;top:206.3px;width:133.8px;height:470.26px;background:#ede831;"></div>
<div style="position:absolute;left:0px;top:206.0px;width:1204px;height:1px;background:#d2d2d2;"></div>
<div style="position:absolute;left:0px;top:253.0px;width:1204px;height:1px;background:#d2d2d2;"></div>
<div style="position:absolute;left:0px;top:276.5px;width:1204px;height:1px;background:#d2d2d2;"></div>
<div style="position:absolute;left:0px;top:299.5px;width:1204px;height:1px;background:#d2d2d2;"></div>
<div style="position:absolute;left:0px;top:323.0px;width:1204px;height:1px;background:#d2d2d2;"></div>
<div style="position:absolute;left:0px;top:346.5px;width:1204px;height:1px;background:#d2d2d2;"></div>
<div style="position:absolute;left:0px;top:370.0px;width:1204px;height:1px;background:#d2d2d2;"></div>
<div style="position:absolute;left:0px;top:393.5px;width:1204px;height:1px;background:#d2d2d2;"></div>
<div style="position:absolute;left:0px;top:417.0px;width:1204px;height:1px;background:#d2d2d2;"></div>
<div style="position:absolute;left:0px;top:440.5px;width:1204px;height:1px;background:#d2d2d2;"></div>
<div style="position:absolute;left:0px;top:464.0px;width:1204px;height:1px;background:#d2d2d2;"></div>
<div style="position:absolute;left:0px;top:487.5px;width:1204px;height:1px;background:#d2d2d2;"></div>
<div style="position:absolute;left:0px;top:511.0px;width:1204px;height:1px;background:#d2d2d2;"></div>
<div style="position:absolute;left:0px;top:534.5px;width:1204px;height:1px;background:#d2d2d2;"></div>
<div style="position:absolute;left:0px;top:558.0px;width:1204px;height:1px;background:#d2d2d2;"></div>
<div style="position:absolute;left:0px;top:581.5px;width:1204px;height:1px;background:#d2d2d2;"></div>
<div style="position:absolute;left:0px;top:605.0px;width:1204px;height:1px;background:#d2d2d2;"></div>
<div style="position:absolute;left:0px;top:628.5px;width:1204px;height:1px;background:#d2d2d2;"></div>
<div style="position:absolute;left:0px;top:652.0px;width:1204px;height:1px;background:#d2d2d2;"></div>
<div style="position:absolute;left:0px;top:675.5px;width:1204px;height:1px;background:#d2d2d2;"></div>
<div style="position:absolute;left:0px;top:697.5px;width:1204px;height:1px;background:#d2d2d2;"></div>
<div style="position:absolute;left:0px;top:719.5px;width:1204px;height:1px;background:#d2d2d2;"></div>
<div style="position:absolute;left:0px;top:742.0px;width:1204px;height:1px;background:#d2d2d2;"></div>
<div style="position:absolute;left:0px;top:764.0px;width:1204px;height:1px;background:#d2d2d2;"></div>
<div style="position:absolute;left:29.5px;top:176.5px;width:1px;height:595.5px;background:#d2d2d2;"></div>
<div style="position:absolute;left:203.5px;top:176.5px;width:1px;height:595.5px;background:#d2d2d2;"></div>
<div style="position:absolute;left:295.5px;top:176.5px;width:1px;height:595.5px;background:#d2d2d2;"></div>
<div style="position:absolute;left:385.5px;top:176.5px;width:1px;height:595.5px;background:#d2d2d2;"></div>
<div style="position:absolute;left:476.5px;top:176.5px;width:1px;height:595.5px;background:#d2d2d2;"></div>
<div style="position:absolute;left:650.5px;top:176.5px;width:1px;height:595.5px;background:#d2d2d2;"></div>
<div style="position:absolute;left:826.5px;top:176.5px;width:1px;height:595.5px;background:#d2d2d2;"></div>
<div style="position:absolute;left:959.5px;top:176.5px;width:1px;height:595.5px;background:#d2d2d2;"></div>
<div style="position:absolute;left:1049.5px;top:176.5px;width:1px;height:595.5px;background:#d2d2d2;"></div>
<div style="position:absolute;left:1140.5px;top:176.5px;width:1px;height:595.5px;background:#d2d2d2;"></div>
<div style="position:absolute;left:30.5px;top:206.8px;width:796.5px;height:46.0px;background:#bad5a9;"></div>
<div style="position:absolute;left:826.2px;top:206.8px;width:133.4px;height:469.26px;background:#ede831;"></div>
<svg style="position:absolute;left:3px;top:179px;" width="25" height="25" viewBox="0 0 25 25"><path d="M24 0.6 V24 H0.8 Z" fill="#d6d6d6"/></svg>
<div style="position:absolute;left:112.16px;top:182.50px;font:normal 14.5px 'Liberation Sans', sans-serif;line-height:19px;color:#4a4a4a;white-space:pre;">A</div>
<div style="position:absolute;left:245.16px;top:182.50px;font:normal 14.5px 'Liberation Sans', sans-serif;line-height:19px;color:#4a4a4a;white-space:pre;">B</div>
<div style="position:absolute;left:335.76px;top:182.50px;font:normal 14.5px 'Liberation Sans', sans-serif;line-height:19px;color:#4a4a4a;white-space:pre;">C</div>
<div style="position:absolute;left:426.26px;top:182.50px;font:normal 14.5px 'Liberation Sans', sans-serif;line-height:19px;color:#4a4a4a;white-space:pre;">D</div>
<div style="position:absolute;left:559.16px;top:182.50px;font:normal 14.5px 'Liberation Sans', sans-serif;line-height:19px;color:#4a4a4a;white-space:pre;">E</div>
<div style="position:absolute;left:734.57px;top:182.50px;font:normal 14.5px 'Liberation Sans', sans-serif;line-height:19px;color:#4a4a4a;white-space:pre;">F</div>
<div style="position:absolute;left:887.86px;top:182.50px;font:normal 14.5px 'Liberation Sans', sans-serif;line-height:19px;color:#2e7a3c;white-space:pre;-webkit-text-stroke:0.35px #2e7a3c;">G</div>
<div style="position:absolute;left:999.76px;top:182.50px;font:normal 14.5px 'Liberation Sans', sans-serif;line-height:19px;color:#4a4a4a;white-space:pre;">H</div>
<div style="position:absolute;left:1093.48px;top:182.50px;font:normal 14.5px 'Liberation Sans', sans-serif;line-height:19px;color:#4a4a4a;white-space:pre;">I</div>
<div style="position:absolute;left:1183.38px;top:182.50px;font:normal 14.5px 'Liberation Sans', sans-serif;line-height:19px;color:#4a4a4a;white-space:pre;">J</div>
<div style="position:absolute;left:827px;top:204.3px;width:133px;height:2px;background:#2e7a3c;"></div>
<div style="position:absolute;left:10.23px;top:233.20px;font:normal 15px 'Liberation Sans', sans-serif;line-height:20px;color:#454545;white-space:pre;transform-origin:center center;transform:scaleX(1.0337);-webkit-text-stroke:0.2px #454545;">1</div>
<div style="position:absolute;left:10.23px;top:255.77px;font:normal 15px 'Liberation Sans', sans-serif;line-height:20px;color:#2e7a3c;white-space:pre;transform-origin:center center;transform:scaleX(1.0337);-webkit-text-stroke:0.5px #2e7a3c;">2</div>
<div style="position:absolute;left:10.23px;top:279.24px;font:normal 15px 'Liberation Sans', sans-serif;line-height:20px;color:#454545;white-space:pre;transform-origin:center center;transform:scaleX(1.0337);-webkit-text-stroke:0.2px #454545;">3</div>
<div style="position:absolute;left:10.23px;top:302.71px;font:normal 15px 'Liberation Sans', sans-serif;line-height:20px;color:#454545;white-space:pre;transform-origin:center center;transform:scaleX(1.0337);-webkit-text-stroke:0.2px #454545;">4</div>
<div style="position:absolute;left:10.23px;top:326.18px;font:normal 15px 'Liberation Sans', sans-serif;line-height:20px;color:#454545;white-space:pre;transform-origin:center center;transform:scaleX(1.0337);-webkit-text-stroke:0.2px #454545;">5</div>
<div style="position:absolute;left:10.23px;top:349.65px;font:normal 15px 'Liberation Sans', sans-serif;line-height:20px;color:#454545;white-space:pre;transform-origin:center center;transform:scaleX(1.0337);-webkit-text-stroke:0.2px #454545;">6</div>
<div style="position:absolute;left:10.23px;top:373.12px;font:normal 15px 'Liberation Sans', sans-serif;line-height:20px;color:#454545;white-space:pre;transform-origin:center center;transform:scaleX(1.0337);-webkit-text-stroke:0.2px #454545;">7</div>
<div style="position:absolute;left:10.23px;top:396.59px;font:normal 15px 'Liberation Sans', sans-serif;line-height:20px;color:#454545;white-space:pre;transform-origin:center center;transform:scaleX(1.0337);-webkit-text-stroke:0.2px #454545;">8</div>
<div style="position:absolute;left:10.23px;top:420.06px;font:normal 15px 'Liberation Sans', sans-serif;line-height:20px;color:#454545;white-space:pre;transform-origin:center center;transform:scaleX(1.0337);-webkit-text-stroke:0.2px #454545;">9</div>
<div style="position:absolute;left:6.06px;top:443.53px;font:normal 15px 'Liberation Sans', sans-serif;line-height:20px;color:#454545;white-space:pre;transform-origin:center center;transform:scaleX(1.0328);-webkit-text-stroke:0.2px #454545;">10</div>
<div style="position:absolute;left:6.61px;top:467.00px;font:normal 15px 'Liberation Sans', sans-serif;line-height:20px;color:#454545;white-space:pre;transform-origin:center center;transform:scaleX(1.1063);-webkit-text-stroke:0.2px #454545;">11</div>
<div style="position:absolute;left:6.06px;top:490.47px;font:normal 15px 'Liberation Sans', sans-serif;line-height:20px;color:#454545;white-space:pre;transform-origin:center center;transform:scaleX(1.0328);-webkit-text-stroke:0.2px #454545;">12</div>
<div style="position:absolute;left:6.06px;top:513.94px;font:normal 15px 'Liberation Sans', sans-serif;line-height:20px;color:#454545;white-space:pre;transform-origin:center center;transform:scaleX(1.0328);-webkit-text-stroke:0.2px #454545;">13</div>
<div style="position:absolute;left:6.06px;top:537.41px;font:normal 15px 'Liberation Sans', sans-serif;line-height:20px;color:#454545;white-space:pre;transform-origin:center center;transform:scaleX(1.0328);-webkit-text-stroke:0.2px #454545;">14</div>
<div style="position:absolute;left:6.06px;top:560.88px;font:normal 15px 'Liberation Sans', sans-serif;line-height:20px;color:#454545;white-space:pre;transform-origin:center center;transform:scaleX(1.0328);-webkit-text-stroke:0.2px #454545;">15</div>
<div style="position:absolute;left:6.06px;top:584.35px;font:normal 15px 'Liberation Sans', sans-serif;line-height:20px;color:#454545;white-space:pre;transform-origin:center center;transform:scaleX(1.0328);-webkit-text-stroke:0.2px #454545;">16</div>
<div style="position:absolute;left:6.06px;top:607.82px;font:normal 15px 'Liberation Sans', sans-serif;line-height:20px;color:#454545;white-space:pre;transform-origin:center center;transform:scaleX(1.0328);-webkit-text-stroke:0.2px #454545;">17</div>
<div style="position:absolute;left:6.06px;top:631.29px;font:normal 15px 'Liberation Sans', sans-serif;line-height:20px;color:#454545;white-space:pre;transform-origin:center center;transform:scaleX(1.0328);-webkit-text-stroke:0.2px #454545;">18</div>
<div style="position:absolute;left:6.06px;top:654.76px;font:normal 15px 'Liberation Sans', sans-serif;line-height:20px;color:#454545;white-space:pre;transform-origin:center center;transform:scaleX(1.0328);-webkit-text-stroke:0.2px #454545;">19</div>
<div style="position:absolute;left:6.06px;top:676.96px;font:normal 15px 'Liberation Sans', sans-serif;line-height:20px;color:#454545;white-space:pre;transform-origin:center center;transform:scaleX(1.0328);-webkit-text-stroke:0.2px #454545;">20</div>
<div style="position:absolute;left:6.06px;top:699.16px;font:normal 15px 'Liberation Sans', sans-serif;line-height:20px;color:#454545;white-space:pre;transform-origin:center center;transform:scaleX(1.0328);-webkit-text-stroke:0.2px #454545;">21</div>
<div style="position:absolute;left:6.06px;top:721.36px;font:normal 15px 'Liberation Sans', sans-serif;line-height:20px;color:#454545;white-space:pre;transform-origin:center center;transform:scaleX(1.0328);-webkit-text-stroke:0.2px #454545;">22</div>
<div style="position:absolute;left:6.06px;top:743.56px;font:normal 15px 'Liberation Sans', sans-serif;line-height:20px;color:#454545;white-space:pre;transform-origin:center center;transform:scaleX(1.0328);-webkit-text-stroke:0.2px #454545;">23</div>
<div style="position:absolute;left:27.7px;top:253.3px;width:1.8px;height:23.47px;background:#2e7a3c;"></div>
<div style="position:absolute;left:64.79px;top:220.00px;font:normal 15px 'Liberation Sans', sans-serif;line-height:20px;color:#111;white-space:pre;transform-origin:center center;transform:scaleX(1.0500);-webkit-text-stroke:0.5px #111;">Марка, модель</div>
<div style="position:absolute;left:233.19px;top:220.00px;font:normal 15px 'Liberation Sans', sans-serif;line-height:20px;color:#111;white-space:pre;transform-origin:center center;transform:scaleX(1.0107);-webkit-text-stroke:0.5px #111;">Цвет</div>
<div style="position:absolute;left:329.05px;top:210.00px;font:normal 15px 'Liberation Sans', sans-serif;line-height:20px;color:#111;white-space:pre;transform-origin:center center;transform:scaleX(0.9817);-webkit-text-stroke:0.5px #111;">Год</div>
<div style="position:absolute;left:312.52px;top:232.20px;font:normal 15px 'Liberation Sans', sans-serif;line-height:20px;color:#111;white-space:pre;transform-origin:center center;transform:scaleX(1.0346);-webkit-text-stroke:0.5px #111;">выпуска</div>
<div style="position:absolute;left:399.05px;top:220.00px;font:normal 15px 'Liberation Sans', sans-serif;line-height:20px;color:#111;white-space:pre;transform-origin:center center;transform:scaleX(1.0178);-webkit-text-stroke:0.5px #111;">Объем, л</div>
<div style="position:absolute;left:517.22px;top:220.00px;font:normal 15px 'Liberation Sans', sans-serif;line-height:20px;color:#111;white-space:pre;transform-origin:center center;transform:scaleX(1.0249);-webkit-text-stroke:0.5px #111;">ФИО клиента</div>
<div style="position:absolute;left:707.88px;top:220.00px;font:normal 15px 'Liberation Sans', sans-serif;line-height:20px;color:#111;white-space:pre;transform-origin:center center;transform:scaleX(0.9759);-webkit-text-stroke:0.5px #111;">Телефон</div>
<div style="position:absolute;left:856.99px;top:220.00px;font:normal 15px 'Liberation Sans', sans-serif;line-height:20px;color:#111;white-space:pre;transform-origin:center center;transform:scaleX(1.0184);-webkit-text-stroke:0.5px #111;">Цена, руб.</div>
<div style="position:absolute;left:30.5px;top:253.4px;width:171.6px;height:23px;background:#dee3ee;"></div>
<div style="position:absolute;left:72.38px;top:255.37px;font:normal 15px 'Liberation Sans', sans-serif;line-height:20px;color:#111;white-space:pre;transform-origin:center center;transform:scaleX(0.9387);-webkit-text-stroke:0.5px #111;">Lexus ES250</div>
<div style="position:absolute;left:224.02px;top:255.37px;font:normal 15px 'Liberation Sans', sans-serif;line-height:20px;color:#111;white-space:pre;transform-origin:center center;transform:scaleX(1.0580);-webkit-text-stroke:0.5px #111;">черный</div>
<div style="position:absolute;left:324.31px;top:255.37px;font:normal 15px 'Liberation Sans', sans-serif;line-height:20px;color:#111;white-space:pre;transform-origin:center center;transform:scaleX(1.0328);-webkit-text-stroke:0.5px #111;">2019</div>
<div style="position:absolute;left:421.07px;top:255.37px;font:normal 15px 'Liberation Sans', sans-serif;line-height:20px;color:#111;white-space:pre;transform-origin:center center;transform:scaleX(1.0300);-webkit-text-stroke:0.5px #111;">2,0</div>
<div style="position:absolute;left:528.19px;top:255.37px;font:normal 15px 'Liberation Sans', sans-serif;line-height:20px;color:#111;white-space:pre;transform-origin:center center;transform:scaleX(1.0364);-webkit-text-stroke:0.5px #111;">Божко А.П.</div>
<div style="position:absolute;left:693.12px;top:255.37px;font:normal 15px 'Liberation Sans', sans-serif;line-height:20px;color:#111;white-space:pre;transform-origin:center center;transform:scaleX(1.0329);-webkit-text-stroke:0.5px #111;">79504561298</div>
<div style="position:absolute;left:76.15px;top:278.84px;font:normal 15px 'Liberation Sans', sans-serif;line-height:20px;color:#111;white-space:pre;transform-origin:center center;transform:scaleX(0.9681);-webkit-text-stroke:0.5px #111;">Nissan Juke</div>
<div style="position:absolute;left:223.66px;top:278.84px;font:normal 15px 'Liberation Sans', sans-serif;line-height:20px;color:#111;white-space:pre;transform-origin:center center;transform:scaleX(1.0531);-webkit-text-stroke:0.5px #111;">желтый</div>
<div style="position:absolute;left:324.31px;top:278.84px;font:normal 15px 'Liberation Sans', sans-serif;line-height:20px;color:#111;white-space:pre;transform-origin:center center;transform:scaleX(1.0328);-webkit-text-stroke:0.5px #111;">2017</div>
<div style="position:absolute;left:421.07px;top:278.84px;font:normal 15px 'Liberation Sans', sans-serif;line-height:20px;color:#111;white-space:pre;transform-origin:center center;transform:scaleX(1.0300);-webkit-text-stroke:0.5px #111;">1,5</div>
<div style="position:absolute;left:529.55px;top:278.84px;font:normal 15px 'Liberation Sans', sans-serif;line-height:20px;color:#111;white-space:pre;transform-origin:center center;transform:scaleX(1.0188);-webkit-text-stroke:0.5px #111;">Тутик К.А.</div>
<div style="position:absolute;left:693.12px;top:278.84px;font:normal 15px 'Liberation Sans', sans-serif;line-height:20px;color:#111;white-space:pre;transform-origin:center center;transform:scaleX(1.0329);-webkit-text-stroke:0.5px #111;">79644326589</div>
<div style="position:absolute;left:75.73px;top:302.31px;font:normal 15px 'Liberation Sans', sans-serif;line-height:20px;color:#111;white-space:pre;transform-origin:center center;transform:scaleX(1.0150);-webkit-text-stroke:0.5px #111;">Toyota Prius</div>
<div style="position:absolute;left:227.91px;top:302.31px;font:normal 15px 'Liberation Sans', sans-serif;line-height:20px;color:#111;white-space:pre;transform-origin:center center;transform:scaleX(1.0506);-webkit-text-stroke:0.5px #111;">белый</div>
<div style="position:absolute;left:324.31px;top:302.31px;font:normal 15px 'Liberation Sans', sans-serif;line-height:20px;color:#111;white-space:pre;transform-origin:center center;transform:scaleX(1.0328);-webkit-text-stroke:0.5px #111;">2018</div>
<div style="position:absolute;left:421.07px;top:302.31px;font:normal 15px 'Liberation Sans', sans-serif;line-height:20px;color:#111;white-space:pre;transform-origin:center center;transform:scaleX(1.0300);-webkit-text-stroke:0.5px #111;">1,8</div>
<div style="position:absolute;left:517.87px;top:302.31px;font:normal 15px 'Liberation Sans', sans-serif;line-height:20px;color:#111;white-space:pre;transform-origin:center center;transform:scaleX(1.0291);-webkit-text-stroke:0.5px #111;">Попович А.А.</div>
<div style="position:absolute;left:693.12px;top:302.31px;font:normal 15px 'Liberation Sans', sans-serif;line-height:20px;color:#111;white-space:pre;transform-origin:center center;transform:scaleX(1.0329);-webkit-text-stroke:0.5px #111;">79147865533</div>
<div style="position:absolute;left:76.15px;top:325.78px;font:normal 15px 'Liberation Sans', sans-serif;line-height:20px;color:#111;white-space:pre;transform-origin:center center;transform:scaleX(1.0159);-webkit-text-stroke:0.5px #111;">Nissan Note</div>
<div style="position:absolute;left:227.91px;top:325.78px;font:normal 15px 'Liberation Sans', sans-serif;line-height:20px;color:#111;white-space:pre;transform-origin:center center;transform:scaleX(1.0506);-webkit-text-stroke:0.5px #111;">белый</div>
<div style="position:absolute;left:324.31px;top:325.78px;font:normal 15px 'Liberation Sans', sans-serif;line-height:20px;color:#111;white-space:pre;transform-origin:center center;transform:scaleX(1.0328);-webkit-text-stroke:0.5px #111;">2017</div>
<div style="position:absolute;left:421.07px;top:325.78px;font:normal 15px 'Liberation Sans', sans-serif;line-height:20px;color:#111;white-space:pre;transform-origin:center center;transform:scaleX(1.0300);-webkit-text-stroke:0.5px #111;">1,2</div>
<div style="position:absolute;left:516.86px;top:325.78px;font:normal 15px 'Liberation Sans', sans-serif;line-height:20px;color:#111;white-space:pre;transform-origin:center center;transform:scaleX(0.9879);-webkit-text-stroke:0.5px #111;">Романов Е.С.</div>
<div style="position:absolute;left:693.12px;top:325.78px;font:normal 15px 'Liberation Sans', sans-serif;line-height:20px;color:#111;white-space:pre;transform-origin:center center;transform:scaleX(1.0329);-webkit-text-stroke:0.5px #111;">79146541285</div>
<div style="position:absolute;left:71.97px;top:349.25px;font:normal 15px 'Liberation Sans', sans-serif;line-height:20px;color:#111;white-space:pre;transform-origin:center center;transform:scaleX(0.9535);-webkit-text-stroke:0.5px #111;">Lexus RX300</div>
<div style="position:absolute;left:224.02px;top:349.25px;font:normal 15px 'Liberation Sans', sans-serif;line-height:20px;color:#111;white-space:pre;transform-origin:center center;transform:scaleX(1.0580);-webkit-text-stroke:0.5px #111;">черный</div>
<div style="position:absolute;left:324.31px;top:349.25px;font:normal 15px 'Liberation Sans', sans-serif;line-height:20px;color:#111;white-space:pre;transform-origin:center center;transform:scaleX(1.0328);-webkit-text-stroke:0.5px #111;">2019</div>
<div style="position:absolute;left:421.07px;top:349.25px;font:normal 15px 'Liberation Sans', sans-serif;line-height:20px;color:#111;white-space:pre;transform-origin:center center;transform:scaleX(1.0300);-webkit-text-stroke:0.5px #111;">2,0</div>
<div style="position:absolute;left:515.84px;top:349.25px;font:normal 15px 'Liberation Sans', sans-serif;line-height:20px;color:#111;white-space:pre;-webkit-text-stroke:0.5px #111;">Соринов О.О.</div>
<div style="position:absolute;left:693.12px;top:349.25px;font:normal 15px 'Liberation Sans', sans-serif;line-height:20px;color:#111;white-space:pre;transform-origin:center center;transform:scaleX(1.0329);-webkit-text-stroke:0.5px #111;">79245387603</div>
<div style="position:absolute;left:72.82px;top:372.72px;font:normal 15px 'Liberation Sans', sans-serif;line-height:20px;color:#111;white-space:pre;transform-origin:center center;transform:scaleX(0.9846);-webkit-text-stroke:0.5px #111;">Suzuki Jimny</div>
<div style="position:absolute;left:228.32px;top:372.72px;font:normal 15px 'Liberation Sans', sans-serif;line-height:20px;color:#111;white-space:pre;transform-origin:center center;transform:scaleX(1.0400);-webkit-text-stroke:0.5px #111;">серый</div>
<div style="position:absolute;left:324.31px;top:372.72px;font:normal 15px 'Liberation Sans', sans-serif;line-height:20px;color:#111;white-space:pre;transform-origin:center center;transform:scaleX(1.0328);-webkit-text-stroke:0.5px #111;">2019</div>
<div style="position:absolute;left:421.07px;top:372.72px;font:normal 15px 'Liberation Sans', sans-serif;line-height:20px;color:#111;white-space:pre;transform-origin:center center;transform:scaleX(1.0300);-webkit-text-stroke:0.5px #111;">0,7</div>
<div style="position:absolute;left:521.67px;top:372.72px;font:normal 15px 'Liberation Sans', sans-serif;line-height:20px;color:#111;white-space:pre;transform-origin:center center;transform:scaleX(1.0107);-webkit-text-stroke:0.5px #111;">Иванец В.А.</div>
<div style="position:absolute;left:693.12px;top:372.72px;font:normal 15px 'Liberation Sans', sans-serif;line-height:20px;color:#111;white-space:pre;transform-origin:center center;transform:scaleX(1.0329);-webkit-text-stroke:0.5px #111;">79145639562</div>
<div style="position:absolute;left:74.05px;top:396.19px;font:normal 15px 'Liberation Sans', sans-serif;line-height:20px;color:#111;white-space:pre;transform-origin:center center;transform:scaleX(1.0151);-webkit-text-stroke:0.5px #111;">Mazda Axela</div>
<div style="position:absolute;left:229.54px;top:396.19px;font:normal 15px 'Liberation Sans', sans-serif;line-height:20px;color:#111;white-space:pre;transform-origin:center center;transform:scaleX(1.0718);-webkit-text-stroke:0.5px #111;">синий</div>
<div style="position:absolute;left:324.31px;top:396.19px;font:normal 15px 'Liberation Sans', sans-serif;line-height:20px;color:#111;white-space:pre;transform-origin:center center;transform:scaleX(1.0328);-webkit-text-stroke:0.5px #111;">2017</div>
<div style="position:absolute;left:421.07px;top:396.19px;font:normal 15px 'Liberation Sans', sans-serif;line-height:20px;color:#111;white-space:pre;transform-origin:center center;transform:scaleX(1.0300);-webkit-text-stroke:0.5px #111;">1,5</div>
<div style="position:absolute;left:519.42px;top:396.19px;font:normal 15px 'Liberation Sans', sans-serif;line-height:20px;color:#111;white-space:pre;transform-origin:center center;transform:scaleX(1.0135);-webkit-text-stroke:0.5px #111;">Петрова У.И.</div>
<div style="position:absolute;left:693.12px;top:396.19px;font:normal 15px 'Liberation Sans', sans-serif;line-height:20px;color:#111;white-space:pre;transform-origin:center center;transform:scaleX(1.0329);-webkit-text-stroke:0.5px #111;">79995471298</div>
<div style="position:absolute;left:49.88px;top:419.66px;font:normal 15px 'Liberation Sans', sans-serif;line-height:20px;color:#111;white-space:pre;transform-origin:center center;transform:scaleX(1.0088);-webkit-text-stroke:0.5px #111;">Toyota Land Cruiser</div>
<div style="position:absolute;left:227.91px;top:419.66px;font:normal 15px 'Liberation Sans', sans-serif;line-height:20px;color:#111;white-space:pre;transform-origin:center center;transform:scaleX(1.0506);-webkit-text-stroke:0.5px #111;">белый</div>
<div style="position:absolute;left:324.31px;top:419.66px;font:normal 15px 'Liberation Sans', sans-serif;line-height:20px;color:#111;white-space:pre;transform-origin:center center;transform:scaleX(1.0328);-webkit-text-stroke:0.5px #111;">2021</div>
<div style="position:absolute;left:421.07px;top:419.66px;font:normal 15px 'Liberation Sans', sans-serif;line-height:20px;color:#111;white-space:pre;transform-origin:center center;transform:scaleX(1.0300);-webkit-text-stroke:0.5px #111;">3,3</div>
<div style="position:absolute;left:516.30px;top:419.66px;font:normal 15px 'Liberation Sans', sans-serif;line-height:20px;color:#111;white-space:pre;transform-origin:center center;transform:scaleX(1.0567);-webkit-text-stroke:0.5px #111;">Миленко И.И.</div>
<div style="position:absolute;left:693.12px;top:419.66px;font:normal 15px 'Liberation Sans', sans-serif;line-height:20px;color:#111;white-space:pre;transform-origin:center center;transform:scaleX(1.0329);-webkit-text-stroke:0.5px #111;">79647865557</div>
<div style="position:absolute;left:44.05px;top:443.13px;font:normal 15px 'Liberation Sans', sans-serif;line-height:20px;color:#111;white-space:pre;transform-origin:center center;transform:scaleX(1.0240);-webkit-text-stroke:0.5px #111;">Toyota Corolla Fielder</div>
<div style="position:absolute;left:228.32px;top:443.13px;font:normal 15px 'Liberation Sans', sans-serif;line-height:20px;color:#111;white-space:pre;transform-origin:center center;transform:scaleX(1.0400);-webkit-text-stroke:0.5px #111;">серый</div>
<div style="position:absolute;left:324.31px;top:443.13px;font:normal 15px 'Liberation Sans', sans-serif;line-height:20px;color:#111;white-space:pre;transform-origin:center center;transform:scaleX(1.0328);-webkit-text-stroke:0.5px #111;">2017</div>
<div style="position:absolute;left:421.07px;top:443.13px;font:normal 15px 'Liberation Sans', sans-serif;line-height:20px;color:#111;white-space:pre;transform-origin:center center;transform:scaleX(1.0300);-webkit-text-stroke:0.5px #111;">1,5</div>
<div style="position:absolute;left:518.78px;top:443.13px;font:normal 15px 'Liberation Sans', sans-serif;line-height:20px;color:#111;white-space:pre;-webkit-text-stroke:0.5px #111;">Северов П.Р.</div>
<div style="position:absolute;left:693.12px;top:443.13px;font:normal 15px 'Liberation Sans', sans-serif;line-height:20px;color:#111;white-space:pre;transform-origin:center center;transform:scaleX(1.0329);-webkit-text-stroke:0.5px #111;">79649831675</div>
<div style="position:absolute;left:71.14px;top:466.60px;font:normal 15px 'Liberation Sans', sans-serif;line-height:20px;color:#111;white-space:pre;transform-origin:center center;transform:scaleX(1.0279);-webkit-text-stroke:0.5px #111;">Toyota Crown</div>
<div style="position:absolute;left:227.91px;top:466.60px;font:normal 15px 'Liberation Sans', sans-serif;line-height:20px;color:#111;white-space:pre;transform-origin:center center;transform:scaleX(1.0506);-webkit-text-stroke:0.5px #111;">белый</div>
<div style="position:absolute;left:324.31px;top:466.60px;font:normal 15px 'Liberation Sans', sans-serif;line-height:20px;color:#111;white-space:pre;transform-origin:center center;transform:scaleX(1.0328);-webkit-text-stroke:0.5px #111;">2018</div>
<div style="position:absolute;left:421.07px;top:466.60px;font:normal 15px 'Liberation Sans', sans-serif;line-height:20px;color:#111;white-space:pre;transform-origin:center center;transform:scaleX(1.0300);-webkit-text-stroke:0.5px #111;">2,5</div>
<div style="position:absolute;left:511.40px;top:466.60px;font:normal 15px 'Liberation Sans', sans-serif;line-height:20px;color:#111;white-space:pre;-webkit-text-stroke:0.5px #111;">Богданова Е.Б.</div>
<div style="position:absolute;left:693.12px;top:466.60px;font:normal 15px 'Liberation Sans', sans-serif;line-height:20px;color:#111;white-space:pre;transform-origin:center center;transform:scaleX(1.0329);-webkit-text-stroke:0.5px #111;">79147450925</div>
<div style="position:absolute;left:75.31px;top:490.07px;font:normal 15px 'Liberation Sans', sans-serif;line-height:20px;color:#111;white-space:pre;transform-origin:center center;transform:scaleX(0.9711);-webkit-text-stroke:0.5px #111;">Mazda CX-3</div>
<div style="position:absolute;left:224.02px;top:490.07px;font:normal 15px 'Liberation Sans', sans-serif;line-height:20px;color:#111;white-space:pre;transform-origin:center center;transform:scaleX(1.0580);-webkit-text-stroke:0.5px #111;">черный</div>
<div style="position:absolute;left:324.31px;top:490.07px;font:normal 15px 'Liberation Sans', sans-serif;line-height:20px;color:#111;white-space:pre;transform-origin:center center;transform:scaleX(1.0328);-webkit-text-stroke:0.5px #111;">2019</div>
<div style="position:absolute;left:421.07px;top:490.07px;font:normal 15px 'Liberation Sans', sans-serif;line-height:20px;color:#111;white-space:pre;transform-origin:center center;transform:scaleX(1.0300);-webkit-text-stroke:0.5px #111;">2,0</div>
<div style="position:absolute;left:534.03px;top:490.07px;font:normal 15px 'Liberation Sans', sans-serif;line-height:20px;color:#111;white-space:pre;transform-origin:center center;transform:scaleX(1.0683);-webkit-text-stroke:0.5px #111;">Ким М.Т.</div>
<div style="position:absolute;left:693.12px;top:490.07px;font:normal 15px 'Liberation Sans', sans-serif;line-height:20px;color:#111;white-space:pre;transform-origin:center center;transform:scaleX(1.0329);-webkit-text-stroke:0.5px #111;">79603985621</div>
<div style="position:absolute;left:80.73px;top:513.54px;font:normal 15px 'Liberation Sans', sans-serif;line-height:20px;color:#111;white-space:pre;transform-origin:center center;transform:scaleX(0.9787);-webkit-text-stroke:0.5px #111;">Subaru XV</div>
<div style="position:absolute;left:220.90px;top:513.54px;font:normal 15px 'Liberation Sans', sans-serif;line-height:20px;color:#111;white-space:pre;transform-origin:center center;transform:scaleX(1.0609);-webkit-text-stroke:0.5px #111;">красный</div>
<div style="position:absolute;left:324.31px;top:513.54px;font:normal 15px 'Liberation Sans', sans-serif;line-height:20px;color:#111;white-space:pre;transform-origin:center center;transform:scaleX(1.0328);-webkit-text-stroke:0.5px #111;">2018</div>
<div style="position:absolute;left:421.07px;top:513.54px;font:normal 15px 'Liberation Sans', sans-serif;line-height:20px;color:#111;white-space:pre;transform-origin:center center;transform:scaleX(1.0300);-webkit-text-stroke:0.5px #111;">1,6</div>
<div style="position:absolute;left:504.93px;top:513.54px;font:normal 15px 'Liberation Sans', sans-serif;line-height:20px;color:#111;white-space:pre;transform-origin:center center;transform:scaleX(1.0499);-webkit-text-stroke:0.5px #111;">Максименко А.В.</div>
<div style="position:absolute;left:693.12px;top:513.54px;font:normal 15px 'Liberation Sans', sans-serif;line-height:20px;color:#111;white-space:pre;transform-origin:center center;transform:scaleX(1.0329);-webkit-text-stroke:0.5px #111;">79589034545</div>
<div style="position:absolute;left:62.80px;top:537.01px;font:normal 15px 'Liberation Sans', sans-serif;line-height:20px;color:#111;white-space:pre;transform-origin:center center;transform:scaleX(1.0111);-webkit-text-stroke:0.5px #111;">Subaru Forester</div>
<div style="position:absolute;left:227.91px;top:537.01px;font:normal 15px 'Liberation Sans', sans-serif;line-height:20px;color:#111;white-space:pre;transform-origin:center center;transform:scaleX(1.0506);-webkit-text-stroke:0.5px #111;">белый</div>
<div style="position:absolute;left:324.31px;top:537.01px;font:normal 15px 'Liberation Sans', sans-serif;line-height:20px;color:#111;white-space:pre;transform-origin:center center;transform:scaleX(1.0328);-webkit-text-stroke:0.5px #111;">2021</div>
<div style="position:absolute;left:421.07px;top:537.01px;font:normal 15px 'Liberation Sans', sans-serif;line-height:20px;color:#111;white-space:pre;transform-origin:center center;transform:scaleX(1.0300);-webkit-text-stroke:0.5px #111;">1,8</div>
<div style="position:absolute;left:509.17px;top:537.01px;font:normal 15px 'Liberation Sans', sans-serif;line-height:20px;color:#111;white-space:pre;transform-origin:center center;transform:scaleX(1.0551);-webkit-text-stroke:0.5px #111;">Чопорнова К.М.</div>
<div style="position:absolute;left:693.12px;top:537.01px;font:normal 15px 'Liberation Sans', sans-serif;line-height:20px;color:#111;white-space:pre;transform-origin:center center;transform:scaleX(1.0329);-webkit-text-stroke:0.5px #111;">79086759012</div>
<div style="position:absolute;left:59.89px;top:560.48px;font:normal 15px 'Liberation Sans', sans-serif;line-height:20px;color:#111;white-space:pre;transform-origin:center center;transform:scaleX(1.0469);-webkit-text-stroke:0.5px #111;">Mitsubishi Pajero</div>
<div style="position:absolute;left:224.02px;top:560.48px;font:normal 15px 'Liberation Sans', sans-serif;line-height:20px;color:#111;white-space:pre;transform-origin:center center;transform:scaleX(1.0580);-webkit-text-stroke:0.5px #111;">черный</div>
<div style="position:absolute;left:324.31px;top:560.48px;font:normal 15px 'Liberation Sans', sans-serif;line-height:20px;color:#111;white-space:pre;transform-origin:center center;transform:scaleX(1.0328);-webkit-text-stroke:0.5px #111;">2017</div>
<div style="position:absolute;left:421.07px;top:560.48px;font:normal 15px 'Liberation Sans', sans-serif;line-height:20px;color:#111;white-space:pre;transform-origin:center center;transform:scaleX(1.0300);-webkit-text-stroke:0.5px #111;">3,0</div>
<div style="position:absolute;left:506.16px;top:560.48px;font:normal 15px 'Liberation Sans', sans-serif;line-height:20px;color:#111;white-space:pre;transform-origin:center center;transform:scaleX(1.0185);-webkit-text-stroke:0.5px #111;">Бонларенко К.С.</div>
<div style="position:absolute;left:693.12px;top:560.48px;font:normal 15px 'Liberation Sans', sans-serif;line-height:20px;color:#111;white-space:pre;transform-origin:center center;transform:scaleX(1.0329);-webkit-text-stroke:0.5px #111;">79142369874</div>
<div style="position:absolute;left:74.46px;top:583.95px;font:normal 15px 'Liberation Sans', sans-serif;line-height:20px;color:#111;white-space:pre;-webkit-text-stroke:0.5px #111;">Honda Vezel</div>
<div style="position:absolute;left:228.32px;top:583.95px;font:normal 15px 'Liberation Sans', sans-serif;line-height:20px;color:#111;white-space:pre;transform-origin:center center;transform:scaleX(1.0400);-webkit-text-stroke:0.5px #111;">серый</div>
<div style="position:absolute;left:324.31px;top:583.95px;font:normal 15px 'Liberation Sans', sans-serif;line-height:20px;color:#111;white-space:pre;transform-origin:center center;transform:scaleX(1.0328);-webkit-text-stroke:0.5px #111;">2015</div>
<div style="position:absolute;left:421.07px;top:583.95px;font:normal 15px 'Liberation Sans', sans-serif;line-height:20px;color:#111;white-space:pre;transform-origin:center center;transform:scaleX(1.0300);-webkit-text-stroke:0.5px #111;">1,5</div>
<div style="position:absolute;left:507.60px;top:583.95px;font:normal 15px 'Liberation Sans', sans-serif;line-height:20px;color:#111;white-space:pre;transform-origin:center center;transform:scaleX(1.0625);-webkit-text-stroke:0.5px #111;">Деменович М.Л.</div>
<div style="position:absolute;left:693.12px;top:583.95px;font:normal 15px 'Liberation Sans', sans-serif;line-height:20px;color:#111;white-space:pre;transform-origin:center center;transform:scaleX(1.0329);-webkit-text-stroke:0.5px #111;">79503237677</div>
<div style="position:absolute;left:74.07px;top:607.42px;font:normal 15px 'Liberation Sans', sans-serif;line-height:20px;color:#111;white-space:pre;transform-origin:center center;transform:scaleX(0.9745);-webkit-text-stroke:0.5px #111;">Toyota C-HR</div>
<div style="position:absolute;left:220.90px;top:607.42px;font:normal 15px 'Liberation Sans', sans-serif;line-height:20px;color:#111;white-space:pre;transform-origin:center center;transform:scaleX(1.0609);-webkit-text-stroke:0.5px #111;">красный</div>
<div style="position:absolute;left:324.31px;top:607.42px;font:normal 15px 'Liberation Sans', sans-serif;line-height:20px;color:#111;white-space:pre;transform-origin:center center;transform:scaleX(1.0328);-webkit-text-stroke:0.5px #111;">2017</div>
<div style="position:absolute;left:421.07px;top:607.42px;font:normal 15px 'Liberation Sans', sans-serif;line-height:20px;color:#111;white-space:pre;transform-origin:center center;transform:scaleX(1.0300);-webkit-text-stroke:0.5px #111;">1,2</div>
<div style="position:absolute;left:515.37px;top:607.42px;font:normal 15px 'Liberation Sans', sans-serif;line-height:20px;color:#111;white-space:pre;transform-origin:center center;transform:scaleX(0.9888);-webkit-text-stroke:0.5px #111;">Пылеева И.С.</div>
<div style="position:absolute;left:693.12px;top:607.42px;font:normal 15px 'Liberation Sans', sans-serif;line-height:20px;color:#111;white-space:pre;transform-origin:center center;transform:scaleX(1.0329);-webkit-text-stroke:0.5px #111;">79145638546</div>
<div style="position:absolute;left:63.63px;top:630.89px;font:normal 15px 'Liberation Sans', sans-serif;line-height:20px;color:#111;white-space:pre;transform-origin:center center;transform:scaleX(1.0108);-webkit-text-stroke:0.5px #111;">Subaru Impreza</div>
<div style="position:absolute;left:220.90px;top:630.89px;font:normal 15px 'Liberation Sans', sans-serif;line-height:20px;color:#111;white-space:pre;transform-origin:center center;transform:scaleX(1.0609);-webkit-text-stroke:0.5px #111;">красный</div>
<div style="position:absolute;left:324.31px;top:630.89px;font:normal 15px 'Liberation Sans', sans-serif;line-height:20px;color:#111;white-space:pre;transform-origin:center center;transform:scaleX(1.0328);-webkit-text-stroke:0.5px #111;">2019</div>
<div style="position:absolute;left:421.07px;top:630.89px;font:normal 15px 'Liberation Sans', sans-serif;line-height:20px;color:#111;white-space:pre;transform-origin:center center;transform:scaleX(1.0300);-webkit-text-stroke:0.5px #111;">2,0</div>
<div style="position:absolute;left:534.15px;top:630.89px;font:normal 15px 'Liberation Sans', sans-serif;line-height:20px;color:#111;white-space:pre;transform-origin:center center;transform:scaleX(0.9895);-webkit-text-stroke:0.5px #111;">Пак Б.О.</div>
<div style="position:absolute;left:693.12px;top:630.89px;font:normal 15px 'Liberation Sans', sans-serif;line-height:20px;color:#111;white-space:pre;transform-origin:center center;transform:scaleX(1.0329);-webkit-text-stroke:0.5px #111;">79503458423</div>
<div style="position:absolute;left:67.81px;top:654.36px;font:normal 15px 'Liberation Sans', sans-serif;line-height:20px;color:#111;white-space:pre;transform-origin:center center;transform:scaleX(0.9914);-webkit-text-stroke:0.5px #111;">Nissan Skyline</div>
<div style="position:absolute;left:227.91px;top:654.36px;font:normal 15px 'Liberation Sans', sans-serif;line-height:20px;color:#111;white-space:pre;transform-origin:center center;transform:scaleX(1.0506);-webkit-text-stroke:0.5px #111;">белый</div>
<div style="position:absolute;left:324.31px;top:654.36px;font:normal 15px 'Liberation Sans', sans-serif;line-height:20px;color:#111;white-space:pre;transform-origin:center center;transform:scaleX(1.0328);-webkit-text-stroke:0.5px #111;">2017</div>
<div style="position:absolute;left:421.07px;top:654.36px;font:normal 15px 'Liberation Sans', sans-serif;line-height:20px;color:#111;white-space:pre;transform-origin:center center;transform:scaleX(1.0300);-webkit-text-stroke:0.5px #111;">2,0</div>
<div style="position:absolute;left:516.45px;top:654.36px;font:normal 15px 'Liberation Sans', sans-serif;line-height:20px;color:#111;white-space:pre;transform-origin:center center;transform:scaleX(1.0117);-webkit-text-stroke:0.5px #111;">Семенов В.Д.</div>
<div style="position:absolute;left:693.12px;top:654.36px;font:normal 15px 'Liberation Sans', sans-serif;line-height:20px;color:#111;white-space:pre;transform-origin:center center;transform:scaleX(1.0329);-webkit-text-stroke:0.5px #111;">79613367435</div>
<div style="position:absolute;left:30px;top:251.7px;width:172px;height:1.9px;background:#2459ba;"></div>
<div style="position:absolute;left:30px;top:276.2px;width:172px;height:2px;background:#2459ba;"></div>
<div style="position:absolute;left:203.5px;top:257px;width:2.2px;height:15.8px;background:#2459ba;"></div>
<div style="position:absolute;left:201.3px;top:250.5px;width:5.6px;height:5.2px;background:#2459ba;box-shadow:0 0 0 0.8px rgba(240,240,240,.9);"></div>
<div style="position:absolute;left:201.3px;top:274.1px;width:5.6px;height:5.2px;background:#2459ba;box-shadow:0 0 0 0.8px rgba(240,240,240,.9);"></div>
<div style="position:absolute;left:29.4px;top:250.8px;width:2.6px;height:4px;background:#2459ba;"></div>
<div style="position:absolute;left:29.4px;top:275.2px;width:2.6px;height:4px;background:#2459ba;"></div>
<div style="position:absolute;left:827px;top:254.2px;width:314px;height:21.6px;background:#ede831;"></div>
<div style="position:absolute;left:825.2px;top:251.5px;width:2.1px;height:26.5px;background:#2a6b3c;"></div>
<div style="position:absolute;left:825.2px;top:251.5px;width:135.8px;height:1.9px;background:#2a6b3c;"></div>
<div style="position:absolute;left:825.2px;top:276px;width:131.4px;height:2px;background:#2a6b3c;"></div>
<div style="position:absolute;left:956.2px;top:275.4px;width:5.8px;height:3.8px;background:#226a5c;"></div>
<div style="position:absolute;left:829.80px;top:256.40px;font:normal 15px 'Liberation Sans', sans-serif;line-height:20px;color:#111;white-space:pre;transform-origin:left center;transform:scaleX(1.0226);-webkit-text-stroke:0.42px #111;">=ВПР(A2;'каталог авто'!$A$2:$E$19;5;0)</div>
<div style="position:absolute;left:1203.3px;top:176.5px;width:16.7px;height:599.5px;background:#eeeeee;border-left:1px solid #d9d9d9;border-right:1px solid #dcdcdc;box-sizing:border-box;"></div>
<div style="position:absolute;left:1207.6px;top:182.3px;width:9.5px;height:329px;background:#939393;border-radius:5px;"></div>
<div style="position:absolute;left:1220px;top:177px;width:320px;height:638px;background:#e8e8e8;"></div>
<div style="position:absolute;left:1220px;top:177px;width:1px;height:638px;background:#d3d3d3;"></div>
<div style="position:absolute;left:1221px;top:176.5px;width:319px;height:27px;background:#dfdfdf;"></div>
<div style="position:absolute;left:1240.40px;top:180.60px;font:bold 15px 'Liberation Sans', sans-serif;line-height:20px;color:#2a2a2a;white-space:pre;transform-origin:left center;transform:scaleX(1.0334);">Построитель формул</div>
<svg style="position:absolute;left:1518px;top:183px;" width="16" height="16" viewBox="0 0 16 16"><circle cx="7.8" cy="8" r="7" fill="#6a6a6a"/><path d="M4.9 5.1 L10.7 10.9 M10.7 5.1 L4.9 10.9" stroke="#e6e6e6" stroke-width="1.4" stroke-linecap="round"/></svg>
<svg style="position:absolute;left:1240px;top:215px;" width="179" height="23.5" viewBox="0 0 179 23.5"><path d="M10 0.8 H173 Q177 0.8 177 4.8 V18 Q177 22 173 22 H10 L1 11.4 Z" fill="#f3f3f3" stroke="#cfcfcf" stroke-width="1" stroke-linejoin="round"/><path d="M10 22.4 H173" stroke="#bdbdbd" stroke-width="0.8"/></svg>
<div style="position:absolute;left:1252.50px;top:218.20px;font:normal 13.5px 'Liberation Sans', sans-serif;line-height:18px;color:#3a3a3a;white-space:pre;transform-origin:left center;transform:scaleX(1.0817);-webkit-text-stroke:0.2px #3a3a3a;">Показать все функции</div>
<div style="position:absolute;left:1240.60px;top:251.00px;font:normal 17px 'Liberation Sans', sans-serif;line-height:22px;color:#2a2a2a;white-space:pre;transform-origin:left center;transform:scaleX(0.9282);">ВПР</div>
<div style="position:absolute;left:1241.00px;top:280.20px;font:bold 13px 'Liberation Sans', sans-serif;line-height:17px;color:#1f1f1f;white-space:pre;transform-origin:left center;transform:scaleX(1.0065);">Искомое_значение</div>
<div style="position:absolute;left:1373.80px;top:280.20px;font:normal 13px 'Liberation Sans', sans-serif;line-height:17px;color:#444;white-space:pre;transform-origin:left center;transform:scaleX(1.0535);">=</div>
<div style="position:absolute;left:1393.00px;top:280.20px;font:normal 13px 'Liberation Sans', sans-serif;line-height:17px;color:#858585;white-space:pre;transform-origin:left center;transform:scaleX(0.9887);">"Lexus ES250"</div>
<div style="position:absolute;left:1240.8px;top:303.5px;width:264.6px;height:21.8px;background:#f1f1f1;border:1px solid #dadada;border-top-color:#d2d2d2;border-radius:2px;box-sizing:border-box;box-shadow:0 1px 1px rgba(0,0,0,.16);"></div>
<div style="position:absolute;left:1246.00px;top:306.10px;font:normal 14px 'Liberation Sans', sans-serif;line-height:18px;color:#2f6bd6;white-space:pre;">A2</div>
<svg style="position:absolute;left:1486px;top:306.7px;" width="17" height="15" viewBox="0 0 17 15"><rect x="0.6" y="0.6" width="15.4" height="13.4" rx="1.2" fill="#f6f6f6" stroke="#b4b4b4" stroke-width="1"/><path d="M6.4 0.6 V14 M11.2 0.6 V14 M0.6 4.6 H16 M0.6 9.6 H16" stroke="#d2d2d2" stroke-width="0.7"/><rect x="0.4" y="0.4" width="6.2" height="4" fill="#2a6cc4"/><path d="M6.6 9.8 H11 V6.8 H16 V14 H6.6 Z" fill="#9db9de"/><path d="M5.4 4 L5.6 9.2 L7.2 7.8 L10 10.8 L11.4 9.6 L8.6 6.6 L10.4 5.2 Z" fill="#c8302c"/></svg>
<div style="position:absolute;left:1241.00px;top:334.70px;font:bold 13px 'Liberation Sans', sans-serif;line-height:17px;color:#1f1f1f;white-space:pre;transform-origin:left center;transform:scaleX(0.8526);">Таблица</div>
<div style="position:absolute;left:1295.20px;top:334.70px;font:normal 13px 'Liberation Sans', sans-serif;line-height:17px;color:#444;white-space:pre;transform-origin:left center;transform:scaleX(1.0535);">=</div>
<div style="position:absolute;left:1311.00px;top:334.70px;font:normal 13px 'Liberation Sans', sans-serif;line-height:17px;color:#858585;white-space:pre;transform-origin:left center;transform:scaleX(0.8366);">{"Honda Vezel";"серый";2015;1,5;165…</div>
<div style="position:absolute;left:1240.8px;top:358.3px;width:264.6px;height:21.8px;background:#f1f1f1;border:1px solid #dadada;border-top-color:#d2d2d2;border-radius:2px;box-sizing:border-box;box-shadow:0 1px 1px rgba(0,0,0,.16);"></div>
<div style="position:absolute;left:1246.00px;top:360.90px;font:normal 14px 'Liberation Sans', sans-serif;line-height:18px;color:#3a3a3a;white-space:pre;transform-origin:left center;transform:scaleX(1.0533);">'каталог авто'!$A$2:$E$19</div>
<svg style="position:absolute;left:1486px;top:361.5px;" width="17" height="15" viewBox="0 0 17 15"><rect x="0.6" y="0.6" width="15.4" height="13.4" rx="1.2" fill="#f6f6f6" stroke="#b4b4b4" stroke-width="1"/><path d="M6.4 0.6 V14 M11.2 0.6 V14 M0.6 4.6 H16 M0.6 9.6 H16" stroke="#d2d2d2" stroke-width="0.7"/><rect x="0.4" y="0.4" width="6.2" height="4" fill="#2a6cc4"/><path d="M6.6 9.8 H11 V6.8 H16 V14 H6.6 Z" fill="#9db9de"/><path d="M5.4 4 L5.6 9.2 L7.2 7.8 L10 10.8 L11.4 9.6 L8.6 6.6 L10.4 5.2 Z" fill="#c8302c"/></svg>
<div style="position:absolute;left:1241.00px;top:389.20px;font:bold 13px 'Liberation Sans', sans-serif;line-height:17px;color:#1f1f1f;white-space:pre;transform-origin:left center;transform:scaleX(0.9861);">Номер_столбца</div>
<div style="position:absolute;left:1352.00px;top:389.20px;font:normal 13px 'Liberation Sans', sans-serif;line-height:17px;color:#444;white-space:pre;transform-origin:left center;transform:scaleX(1.0535);">=</div>
<div style="position:absolute;left:1371.00px;top:389.20px;font:normal 13px 'Liberation Sans', sans-serif;line-height:17px;color:#858585;white-space:pre;">5</div>
<div style="position:absolute;left:1240.8px;top:412.4px;width:264.6px;height:21.8px;background:#f1f1f1;border:1px solid #dadada;border-top-color:#d2d2d2;border-radius:2px;box-sizing:border-box;box-shadow:0 1px 1px rgba(0,0,0,.16);"></div>
<div style="position:absolute;left:1246.00px;top:415.00px;font:normal 14px 'Liberation Sans', sans-serif;line-height:18px;color:#3a3a3a;white-space:pre;">5</div>
<svg style="position:absolute;left:1486px;top:415.59999999999997px;" width="17" height="15" viewBox="0 0 17 15"><rect x="0.6" y="0.6" width="15.4" height="13.4" rx="1.2" fill="#f6f6f6" stroke="#b4b4b4" stroke-width="1"/><path d="M6.4 0.6 V14 M11.2 0.6 V14 M0.6 4.6 H16 M0.6 9.6 H16" stroke="#d2d2d2" stroke-width="0.7"/><rect x="0.4" y="0.4" width="6.2" height="4" fill="#2a6cc4"/><path d="M6.6 9.8 H11 V6.8 H16 V14 H6.6 Z" fill="#9db9de"/><path d="M5.4 4 L5.6 9.2 L7.2 7.8 L10 10.8 L11.4 9.6 L8.6 6.6 L10.4 5.2 Z" fill="#c8302c"/></svg>
<div style="position:absolute;left:1241.00px;top:443.40px;font:bold 13px 'Liberation Sans', sans-serif;line-height:17px;color:#1f1f1f;white-space:pre;transform-origin:left center;transform:scaleX(0.9737);">Интервальный_просмотр</div>
<div style="position:absolute;left:1413.60px;top:443.40px;font:normal 13px 'Liberation Sans', sans-serif;line-height:17px;color:#444;white-space:pre;transform-origin:left center;transform:scaleX(1.0535);">=</div>
<div style="position:absolute;left:1432.30px;top:443.40px;font:normal 13px 'Liberation Sans', sans-serif;line-height:17px;color:#858585;white-space:pre;transform-origin:left center;transform:scaleX(1.0204);">ЛОЖЬ</div>
<div style="position:absolute;left:1240.8px;top:466.7px;width:264.6px;height:21.8px;background:#f1f1f1;border:1px solid #dadada;border-top-color:#d2d2d2;border-radius:2px;box-sizing:border-box;box-shadow:0 1px 1px rgba(0,0,0,.16);"></div>
<div style="position:absolute;left:1246.00px;top:469.30px;font:normal 14px 'Liberation Sans', sans-serif;line-height:18px;color:#3a3a3a;white-space:pre;">0</div>
<svg style="position:absolute;left:1486px;top:469.9px;" width="17" height="15" viewBox="0 0 17 15"><rect x="0.6" y="0.6" width="15.4" height="13.4" rx="1.2" fill="#f6f6f6" stroke="#b4b4b4" stroke-width="1"/><path d="M6.4 0.6 V14 M11.2 0.6 V14 M0.6 4.6 H16 M0.6 9.6 H16" stroke="#d2d2d2" stroke-width="0.7"/><rect x="0.4" y="0.4" width="6.2" height="4" fill="#2a6cc4"/><path d="M6.6 9.8 H11 V6.8 H16 V14 H6.6 Z" fill="#9db9de"/><path d="M5.4 4 L5.6 9.2 L7.2 7.8 L10 10.8 L11.4 9.6 L8.6 6.6 L10.4 5.2 Z" fill="#c8302c"/></svg>
<div style="position:absolute;left:1526.5px;top:205px;width:1px;height:324px;background:#dcdcdc;"></div>
<div style="position:absolute;left:1532px;top:276px;width:7px;height:240px;background:#b9b9b9;border-radius:4px;"></div>
<div style="position:absolute;left:1221px;top:528.3px;width:319px;height:1px;background:#d6d6d6;"></div>
<div style="position:absolute;left:1221px;top:529.3px;width:319px;height:13.5px;background:#ededed;"></div>
<div style="position:absolute;left:1221px;top:542.8px;width:319px;height:0.8px;background:#dedede;"></div>
<div style="position:absolute;left:1242.00px;top:549.30px;font:normal 13px 'Liberation Sans', sans-serif;line-height:17px;color:#3a3a3a;white-space:pre;-webkit-text-stroke:0.25px #3a3a3a;">Результат: 3630000</div>
<div style="position:absolute;left:1464.5px;top:548.4px;width:59px;height:18.4px;background:#f6f6f6;border:1px solid #cfcfcf;border-bottom-color:#b9b9b9;border-radius:4px;box-sizing:border-box;"></div>
<div style="position:absolute;left:1473.92px;top:549.30px;font:normal 13px 'Liberation Sans', sans-serif;line-height:17px;color:#2a2a2a;white-space:pre;transform-origin:center center;transform:scaleX(0.9662);">Готово</div>
<div style="position:absolute;left:1239.7px;top:578px;width:283px;height:1px;background:#d0d0d0;"></div>
<div style="position:absolute;left:1243.00px;top:587.40px;font:italic normal 20px 'Liberation Serif', serif;line-height:26px;color:#3a7bd5;white-space:pre;transform-origin:left center;transform:scaleX(1.2745);-webkit-text-stroke:0.35px #3a7bd5;">fx</div>
<div style="position:absolute;left:1267.00px;top:589.10px;font:bold 17.5px 'Liberation Sans', sans-serif;line-height:23px;color:#1f1f1f;white-space:pre;transform-origin:left center;transform:scaleX(0.9569);">ВПР</div>
<div style="position:absolute;left:1245.30px;top:621.50px;font:normal 12.5px 'Liberation Sans', sans-serif;line-height:16px;color:#454545;white-space:pre;transform-origin:left center;transform:scaleX(0.9554);-webkit-text-stroke:0.25px #454545;">Ищет значение в крайнем левом столбце</div>
<div style="position:absolute;left:1245.30px;top:638.63px;font:normal 12.5px 'Liberation Sans', sans-serif;line-height:16px;color:#454545;white-space:pre;transform-origin:left center;transform:scaleX(0.9544);-webkit-text-stroke:0.25px #454545;">таблицы и возвращает значение ячейки,</div>
<div style="position:absolute;left:1245.30px;top:655.76px;font:normal 12.5px 'Liberation Sans', sans-serif;line-height:16px;color:#454545;white-space:pre;transform-origin:left center;transform:scaleX(0.9627);-webkit-text-stroke:0.25px #454545;">находящейся в указанном столбце той же</div>
<div style="position:absolute;left:1245.30px;top:672.89px;font:normal 12.5px 'Liberation Sans', sans-serif;line-height:16px;color:#454545;white-space:pre;transform-origin:left center;transform:scaleX(0.9610);-webkit-text-stroke:0.25px #454545;">строки. По умолчанию таблица должна быть</div>
<div style="position:absolute;left:1245.30px;top:690.02px;font:normal 12.5px 'Liberation Sans', sans-serif;line-height:16px;color:#454545;white-space:pre;transform-origin:left center;transform:scaleX(0.9674);-webkit-text-stroke:0.25px #454545;">отсортирована по возрастанию.</div>
<div style="position:absolute;left:1245.30px;top:717.30px;font:bold 15px 'Liberation Sans', sans-serif;line-height:20px;color:#262626;white-space:pre;transform-origin:left center;transform:scaleX(0.9483);">Синтаксис</div>
<div style="position:absolute;left:1245.30px;top:743.00px;font:normal 12px 'Liberation Sans', sans-serif;line-height:16px;color:#454545;white-space:pre;transform-origin:left center;transform:scaleX(0.9637);">ВПР(</div>
<div style="position:absolute;left:1272.90px;top:743.00px;font:bold 12px 'Liberation Sans', sans-serif;line-height:16px;color:#262626;white-space:pre;transform-origin:left center;transform:scaleX(0.9804);">искомое_значение;таблица;номер_стол</div>
<div style="position:absolute;left:1245.30px;top:756.90px;font:bold 12px 'Liberation Sans', sans-serif;line-height:16px;color:#262626;white-space:pre;transform-origin:left center;transform:scaleX(0.9588);">бца;интервальный_просмотр</div>
<div style="position:absolute;left:1415.90px;top:756.90px;font:normal 12px 'Liberation Sans', sans-serif;line-height:16px;color:#454545;white-space:pre;">)</div>
<div style="position:absolute;left:1513.3px;top:622px;width:1px;height:149px;background:#dddddd;"></div>
<div style="position:absolute;left:1527.4px;top:622px;width:1px;height:149px;background:#e0e0e0;"></div>
<div style="position:absolute;left:1518px;top:626px;width:7.6px;height:38.5px;background:#bcbcbc;border-radius:4px;"></div>
<div style="position:absolute;left:1248.00px;top:779.40px;font:normal 13.5px 'Liberation Sans', sans-serif;line-height:18px;color:#2f8a4c;white-space:pre;transform-origin:left center;transform:scaleX(1.0158);text-decoration:underline;text-decoration-thickness:1px;text-underline-offset:2px;">Дополнительная справка по этой функции</div>
<div style="position:absolute;left:0px;top:772px;width:1220px;height:15.5px;background:#ececec;"></div>
<div style="position:absolute;left:0px;top:772px;width:1204px;height:1px;background:#dcdcdc;"></div>
<div style="position:absolute;left:1px;top:776px;width:632.5px;height:9.4px;background:#a9a9a9;border-radius:5px;"></div>
<div style="position:absolute;left:1199.3px;top:772px;width:1.2px;height:15.5px;background:#c6c6c6;"></div>
<div style="position:absolute;left:1200.5px;top:772px;width:3px;height:15.5px;background:#f1f1f1;"></div>
<div style="position:absolute;left:0px;top:787.5px;width:1220px;height:27.5px;background:#e3e3e3;"></div>
<div style="position:absolute;left:0px;top:787.2px;width:1220px;height:1px;background:#d2d2d2;"></div>
<svg style="position:absolute;left:13px;top:794px;" width="12" height="14" viewBox="0 0 12 14"><path d="M10.4 1.2 V12.8 L1.6 7 Z" fill="#b9b9b9"/></svg>
<svg style="position:absolute;left:37px;top:794px;" width="12" height="14" viewBox="0 0 12 14"><path d="M1.6 1.2 V12.8 L10.4 7 Z" fill="#b9b9b9"/></svg>
<div style="position:absolute;left:63.6px;top:790px;width:1px;height:21px;background:#cdcdcd;"></div>
<div style="position:absolute;left:82.80px;top:793.10px;font:normal 13px 'Liberation Sans', sans-serif;line-height:17px;color:#585858;white-space:pre;transform-origin:left center;transform:scaleX(1.0529);">каталог авто</div>
<div style="position:absolute;left:182.8px;top:787.5px;width:90px;height:24.4px;background:#f4f4f4;border-radius:0 0 5px 5px;box-shadow:0 1px 1.5px rgba(0,0,0,.28);"></div>
<div style="position:absolute;left:200.50px;top:793.10px;font:bold 13px 'Liberation Sans', sans-serif;line-height:17px;color:#2f8a4c;white-space:pre;transform-origin:left center;transform:scaleX(0.9735);">клиенты</div>
<svg style="position:absolute;left:286px;top:794px;" width="16" height="16" viewBox="0 0 16 16"><path d="M7.8 1.6 V14 M1.6 7.8 H14" stroke="#3c3c3c" stroke-width="1.7"/></svg>
<div style="position:absolute;left:313px;top:790px;width:1px;height:21px;background:#cdcdcd;"></div>
<div style="position:absolute;left:0px;top:815px;width:1540px;height:25px;background:linear-gradient(#dadada,#cfcfcf);"></div>
<div style="position:absolute;left:0px;top:814.6px;width:1540px;height:1px;background:#bdbdbd;"></div>
<div style="position:absolute;left:25.40px;top:818.80px;font:normal 13.5px 'Liberation Sans', sans-serif;line-height:18px;color:#444;white-space:pre;transform-origin:left center;transform:scaleX(0.9823);">Правка</div>
<svg style="position:absolute;left:1206px;top:820px;" width="16" height="16" viewBox="0 0 16 16"><rect x="0.8" y="0.8" width="13.6" height="13.6" fill="#f0f0f0" stroke="#606060" stroke-width="1.2"/><path d="M5.3 0.8 V14.4 M9.9 0.8 V14.4 M0.8 5.3 H14.4 M0.8 9.9 H14.4" stroke="#606060" stroke-width="1.1"/></svg>
<svg style="position:absolute;left:1244px;top:820px;" width="16" height="16" viewBox="0 0 16 16"><rect x="0.8" y="0.8" width="14" height="13.6" fill="#e4e4e4" stroke="#606060" stroke-width="1.2"/><rect x="3.6" y="3.4" width="8.4" height="8.4" fill="#f0f0f0" stroke="#606060" stroke-width="1"/><path d="M5.4 6 H10.2 M5.4 7.8 H10.2 M5.4 9.6 H10.2" stroke="#606060" stroke-width="0.8"/></svg>
<svg style="position:absolute;left:1282.6px;top:820px;" width="16" height="16" viewBox="0 0 16 16"><rect x="0.8" y="0.8" width="13.8" height="13.6" fill="#f0f0f0" stroke="#606060" stroke-width="1.2"/><path d="M5.2 0.8 V7 H14.6 M10 0.8 V7" fill="none" stroke="#606060" stroke-width="1.1"/></svg>
<div style="position:absolute;left:1318.5px;top:826.8px;width:8px;height:1.8px;background:#3c3c3c;"></div>
<div style="position:absolute;left:1334.7px;top:826px;width:106px;height:3.6px;background:#a6a6a6;border-radius:2px;"></div>
<div style="position:absolute;left:1383.6px;top:819.6px;width:16.4px;height:16.4px;background:#f7f7f7;border-radius:50%;box-shadow:0 0.5px 1.5px rgba(0,0,0,.45);"></div>
<svg style="position:absolute;left:1448px;top:822.6px;" width="11" height="11" viewBox="0 0 11 11"><path d="M5.4 0.8 V10 M0.8 5.4 H10" stroke="#3c3c3c" stroke-width="1.6"/></svg>
<div style="position:absolute;left:1477.00px;top:818.80px;font:normal 14px 'Liberation Sans', sans-serif;line-height:18px;color:#4a4a4a;white-space:pre;transform-origin:left center;transform:scaleX(0.9319);">130 %</div>
<svg style="position:absolute;left:0px;top:0px;pointer-events:none;" width="1540" height="840" viewBox="0 0 1540 840"><rect x="186.20" y="137.40" width="951.80" height="46.20" rx="3.2" ry="3.2" fill="none" stroke="#de4c3e" stroke-width="1.8"/></svg>
<svg style="position:absolute;left:0px;top:0px;pointer-events:none;" width="1540" height="840" viewBox="0 0 1540 840"><rect x="1231.40" y="162.10" width="298.70" height="348.00" rx="3.2" ry="3.2" fill="none" stroke="#de4c3e" stroke-width="1.8"/></svg>
<svg style="position:absolute;left:0px;top:0px;pointer-events:none;" width="1540" height="840" viewBox="0 0 1540 840"><rect x="818.80" y="247.20" width="330.90" height="35.20" rx="3.2" ry="3.2" fill="none" stroke="#de4c3e" stroke-width="1.8"/></svg>
</div></body></html>
